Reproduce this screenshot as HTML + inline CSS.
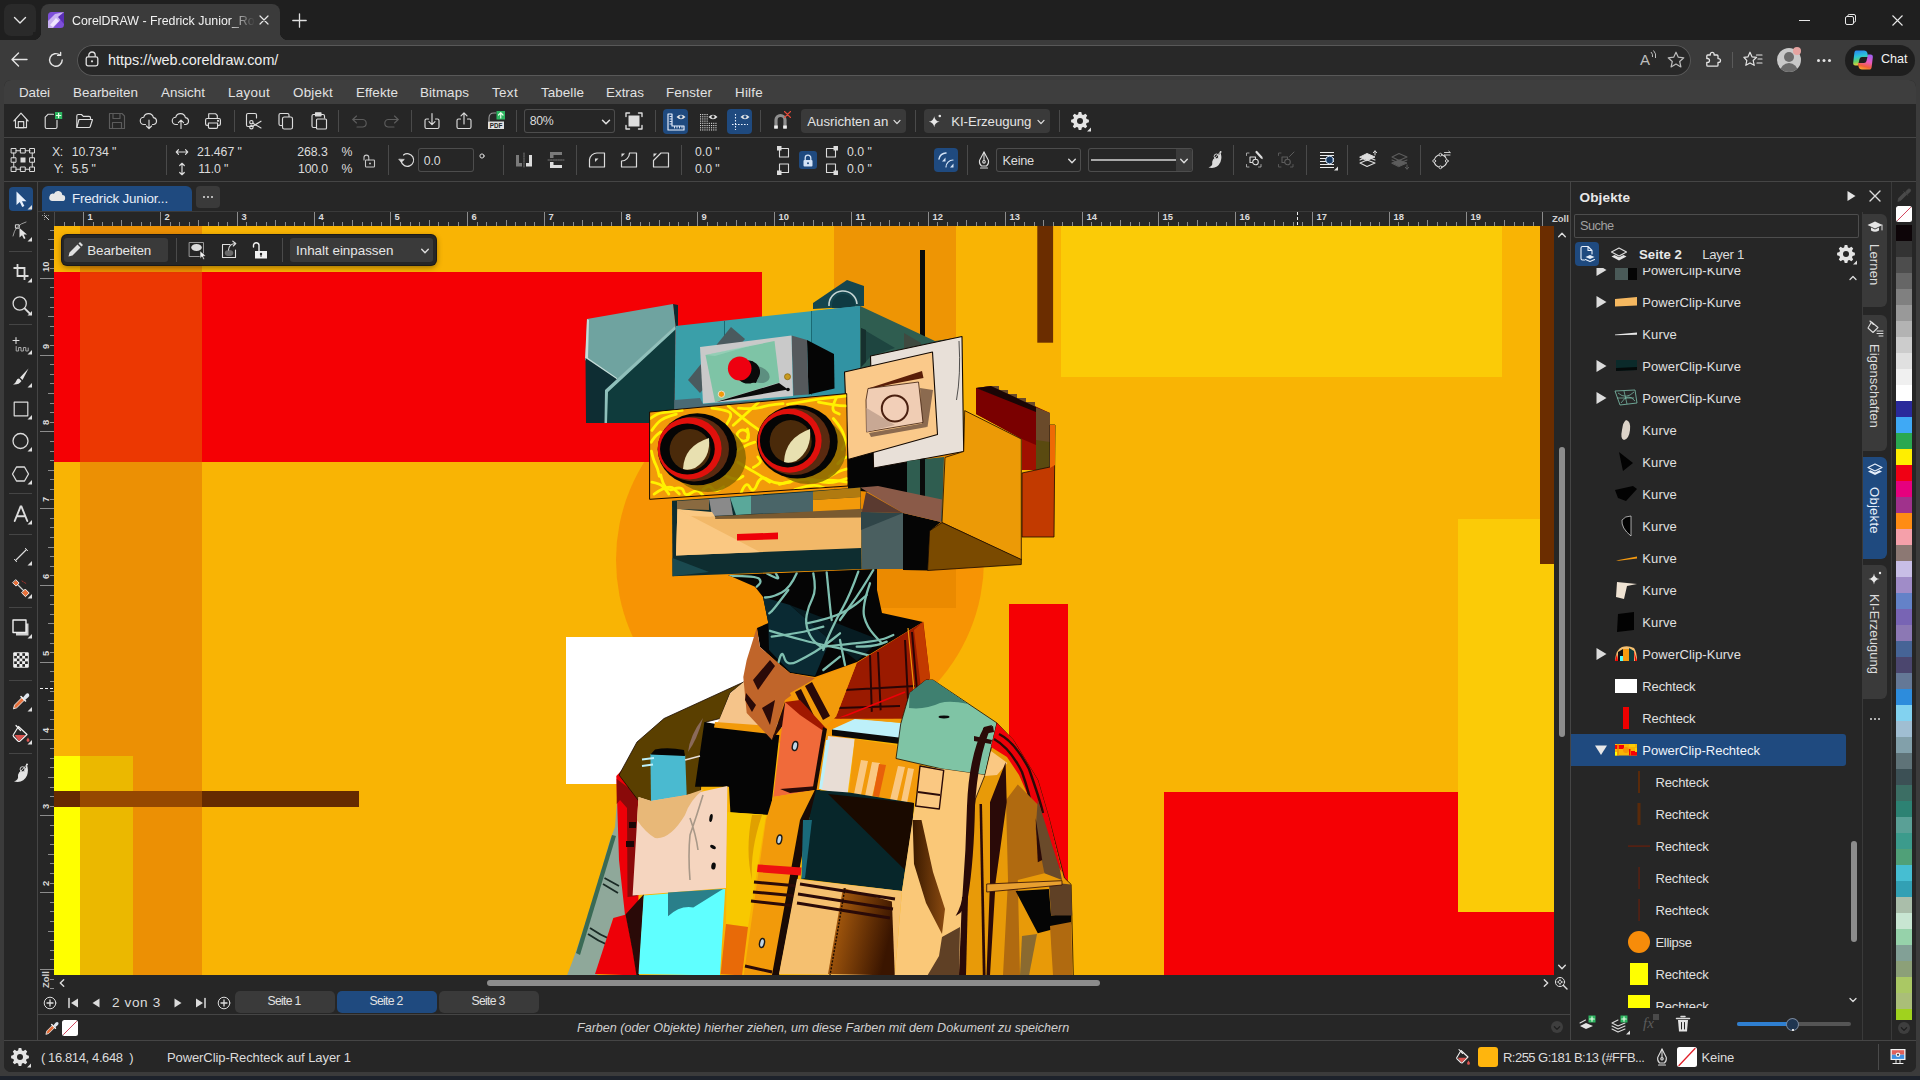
<!DOCTYPE html>
<html><head><meta charset="utf-8"><title>CorelDRAW</title>
<style>
html,body{margin:0;padding:0}
body{width:1920px;height:1080px;background:#3b3b3b;position:relative;overflow:hidden;font-family:"Liberation Sans",sans-serif;color:#d8d8d8;font-size:14px}
.a{position:absolute}
.t{position:absolute;white-space:nowrap;line-height:1}
#app{position:absolute;left:4px;top:80px;width:1912px;height:992px;background:#262626;border-radius:7px;overflow:hidden}
#app .a, #app .t, #app svg.i{ }
.sep{position:absolute;width:1px;background:#4a4a4a}
.hl{position:absolute;height:1px;background:#454545}
svg.i{position:absolute;overflow:visible}

</style></head>
<body>
<!-- browser chrome -->
<div class="a" style="left:0;top:0;width:1920px;height:40px;background:#1f1f1f"></div>
<div class="a" style="left:4px;top:4px;width:32px;height:32px;border-radius:7px;background:#2a2a2a"></div>
<svg class="i" style="left:12px;top:14px" width="16" height="12" viewBox="0 0 16 12"><path d="M2.5 3.5 L8 9 L13.5 3.5" fill="none" stroke="#e6e6e6" stroke-width="1.4" stroke-linecap="round" stroke-linejoin="round"/></svg>
<!-- active tab -->
<div class="a" style="left:41px;top:4px;width:239px;height:36px;border-radius:8px 8px 0 0;background:#3b3b3b"></div>
<div class="a" style="left:33px;top:32px;width:8px;height:8px;background:radial-gradient(circle at 0 0,#1f1f1f 8px,#3b3b3b 8.5px)"></div>
<div class="a" style="left:280px;top:32px;width:8px;height:8px;background:radial-gradient(circle at 100% 0,#1f1f1f 8px,#3b3b3b 8.5px)"></div>
<svg class="i" style="left:48px;top:12px" width="16" height="16" viewBox="0 0 16 16"><rect x="0" y="0" width="16" height="16" rx="3.5" fill="#7d4fd8"/><path d="M0 9 L7 2 L16 0 L16 4 L5 16 L0 16Z" fill="#c9b2f2"/><path d="M2 13 L8 6 L11 9 L5 15Z" fill="#efe6ff"/><path d="M16 0 L16 12 L10 5Z" fill="#5a2fb5"/></svg>
<div class="t" style="left:72px;top:15px;font-size:12.4px;color:#f2f2f2;width:183px;height:18px;overflow:hidden;-webkit-mask-image:linear-gradient(90deg,#000 158px,transparent 183px)">CorelDRAW - Fredrick Junior_Robot</div>
<svg class="i" style="left:259px;top:15px" width="10" height="10" viewBox="0 0 10 10"><path d="M1 1 L9 9 M9 1 L1 9" stroke="#e8e8e8" stroke-width="1.2" stroke-linecap="round"/></svg>
<svg class="i" style="left:292px;top:13px" width="15" height="15" viewBox="0 0 15 15"><path d="M7.5 0.8 V14.2 M0.8 7.5 H14.2" stroke="#e0e0e0" stroke-width="1.3" stroke-linecap="round"/></svg>
<!-- window controls -->
<svg class="i" style="left:1799px;top:20px" width="11" height="2" viewBox="0 0 11 2"><path d="M0 0.5 H11" stroke="#e8e8e8" stroke-width="1"/></svg>
<svg class="i" style="left:1845px;top:14px" width="11" height="11" viewBox="0 0 11 11"><rect x="0.5" y="2.5" width="8" height="8" rx="1.5" fill="none" stroke="#e8e8e8"/><path d="M2.8 2.3 V1.9 Q2.8 0.5 4.2 0.5 H9 Q10.5 0.5 10.5 2 V6.8 Q10.5 8.2 9.1 8.2 H8.7" fill="none" stroke="#e8e8e8"/></svg>
<svg class="i" style="left:1892px;top:15px" width="11" height="11" viewBox="0 0 11 11"><path d="M0.5 0.5 L10.5 10.5 M10.5 0.5 L0.5 10.5" stroke="#e8e8e8" stroke-width="1.1"/></svg>
<!-- address row -->
<div class="a" style="left:0;top:40px;width:1920px;height:40px;background:#3b3b3b"></div>
<svg class="i" style="left:11px;top:52px" width="17" height="15" viewBox="0 0 17 15"><path d="M16 7.5 H1.5 M7.5 1 L1 7.5 L7.5 14" fill="none" stroke="#e4e4e4" stroke-width="1.4" stroke-linecap="round" stroke-linejoin="round"/></svg>
<svg class="i" style="left:48px;top:52px" width="16" height="16" viewBox="0 0 16 16"><path d="M14.2 8 A6.3 6.3 0 1 1 11.9 3.1" fill="none" stroke="#e4e4e4" stroke-width="1.4" stroke-linecap="round"/><path d="M9.6 3.4 H12.6 V0.5" fill="none" stroke="#e4e4e4" stroke-width="1.4" stroke-linecap="round" stroke-linejoin="round"/></svg>
<div class="a" style="left:77px;top:45px;width:1614px;height:31px;border-radius:16px;background:#282828;box-shadow:inset 0 0 0 1px #585858"></div>
<svg class="i" style="left:85px;top:51px" width="14" height="16" viewBox="0 0 14 16"><rect x="1.2" y="5.8" width="11.6" height="9" rx="1.8" fill="none" stroke="#e0e0e0" stroke-width="1.3"/><path d="M3.8 5.8 V4.2 A3.2 3.2 0 0 1 10.2 4.2 V5.8" fill="none" stroke="#e0e0e0" stroke-width="1.3"/><circle cx="7" cy="10.3" r="1.1" fill="#e0e0e0"/></svg>
<div class="t" style="left:108px;top:53px;font-size:14.4px;color:#f0f0f0">https://web.coreldraw.com/</div>
<!-- right addr icons -->
<div class="t" style="left:1640px;top:52px;font-size:15px;color:#bdbdbd">A</div>
<svg class="i" style="left:1650px;top:50px" width="8" height="10" viewBox="0 0 8 10"><path d="M1 2 Q3 4 2.5 7 M3.5 0.5 Q6.5 3.5 5.5 8" fill="none" stroke="#bdbdbd" stroke-width="1"/></svg>
<svg class="i" style="left:1667px;top:51px" width="18" height="17" viewBox="0 0 18 17"><path d="M9 1.2 L11.3 6.2 L16.8 6.8 L12.7 10.5 L13.9 15.9 L9 13.1 L4.1 15.9 L5.3 10.5 L1.2 6.8 L6.7 6.2Z" fill="none" stroke="#bdbdbd" stroke-width="1.2" stroke-linejoin="round"/></svg>
<svg class="i" style="left:1704px;top:51px" width="17" height="17" viewBox="0 0 17 17"><path d="M6.3 3.2 A1.9 1.9 0 0 1 10.1 3.2 V4 H13 Q14 4 14 5 V7.6 H14.6 A1.9 1.9 0 0 1 14.6 11.4 H14 V14.2 Q14 15.2 13 15.2 H3.8 Q2.8 15.2 2.8 14.2 V11.3 H3.6 A1.9 1.9 0 0 0 3.6 7.5 H2.8 V5 Q2.8 4 3.8 4 H6.3Z" fill="none" stroke="#e4e4e4" stroke-width="1.3" stroke-linejoin="round"/></svg>
<div class="a" style="left:1732px;top:52px;width:1px;height:16px;background:#5a5a5a"></div>
<svg class="i" style="left:1743px;top:51px" width="20" height="17" viewBox="0 0 20 17"><path d="M7 1.2 L9 5.8 L13.6 6.3 L10.2 9.5 L11.2 14.3 L7 11.9 L2.8 14.3 L3.8 9.5 L0.9 6.3 L5 5.8Z" fill="none" stroke="#e4e4e4" stroke-width="1.2" stroke-linejoin="round"/><path d="M13.5 4 H19 M15 8 H19 M14 12 H19" stroke="#e4e4e4" stroke-width="1.2" stroke-linecap="round"/></svg>
<div class="a" style="left:1777px;top:48px;width:24px;height:24px;border-radius:12px;background:#c9c9c9;overflow:hidden"><div class="a" style="left:7px;top:4px;width:10px;height:10px;border-radius:5px;background:#6b6b6b"></div><div class="a" style="left:3px;top:15px;width:18px;height:14px;border-radius:9px 9px 0 0;background:#6b6b6b"></div></div>
<div class="a" style="left:1793px;top:47px;width:8px;height:8px;border-radius:4px;background:#e5a3a0"></div>
<div class="a" style="left:1817px;top:59px;width:3px;height:3px;border-radius:2px;background:#e4e4e4;box-shadow:5.5px 0 0 #e4e4e4,11px 0 0 #e4e4e4"></div>
<div class="a" style="left:1845px;top:45px;width:70px;height:31px;border-radius:16px;background:#1e1e1e"></div>
<svg class="i" style="left:1851px;top:49px" width="24" height="22" viewBox="0 0 24 22"><defs><linearGradient id="cp1" x1="0.2" y1="0" x2="0.4" y2="1"><stop offset="0" stop-color="#2a86f0"/><stop offset=".4" stop-color="#2ac4d8"/><stop offset=".7" stop-color="#62d068"/><stop offset="1" stop-color="#f8d030"/></linearGradient><linearGradient id="cp2" x1="0.7" y1="0" x2="0.4" y2="1"><stop offset="0" stop-color="#a060f0"/><stop offset=".45" stop-color="#e85ac0"/><stop offset=".8" stop-color="#f0603a"/><stop offset="1" stop-color="#f8a030"/></linearGradient></defs><path d="M5 1.5 H13 Q15.8 1.5 16.4 4.2 L17.3 8 H11 Q9 8 8.5 10 L7 16.5 H4.5 Q1.8 16.5 2.2 13.5 L3.4 3.5 Q3.8 1.5 5 1.5Z" fill="url(#cp1)"/><path d="M19 20.5 H11 Q8.2 20.5 7.6 17.8 L6.7 14 H13 Q15 14 15.5 12 L17 5.5 H19.5 Q22.2 5.5 21.8 8.5 L20.6 18.5 Q20.2 20.5 19 20.5Z" fill="url(#cp2)"/></svg>
<div class="t" style="left:1881px;top:53px;font-size:12.6px;color:#f2f2f2">Chat</div>
<!-- bottom strip -->
<div class="a" style="left:0;top:1076px;width:1920px;height:4px;background:#1d222b"></div>

<div id="app"><div id="pg" style="position:absolute;left:-4px;top:-80px;width:1920px;height:1080px">
<div class="a" style="left:4px;top:80px;width:1912px;height:24px;background:#3e3e3e;"></div><div class="t" style="left:19px;top:85.53px;font-size:13.4px;color:#e2e2e2;letter-spacing:-0.057px;">Datei</div><div class="t" style="left:73px;top:85.53px;font-size:13.4px;color:#e2e2e2;letter-spacing:0.018px;">Bearbeiten</div><div class="t" style="left:161px;top:85.53px;font-size:13.4px;color:#e2e2e2;letter-spacing:0.008px;">Ansicht</div><div class="t" style="left:228px;top:85.53px;font-size:13.4px;color:#e2e2e2;letter-spacing:0.294px;">Layout</div><div class="t" style="left:293px;top:85.53px;font-size:13.4px;color:#e2e2e2;letter-spacing:0.212px;">Objekt</div><div class="t" style="left:356px;top:85.53px;font-size:13.4px;color:#e2e2e2;letter-spacing:0.076px;">Effekte</div><div class="t" style="left:420px;top:85.53px;font-size:13.4px;color:#e2e2e2;letter-spacing:0.085px;">Bitmaps</div><div class="t" style="left:492px;top:85.53px;font-size:13.4px;color:#e2e2e2;letter-spacing:0.356px;">Text</div><div class="t" style="left:541px;top:85.53px;font-size:13.4px;color:#e2e2e2;letter-spacing:0.076px;">Tabelle</div><div class="t" style="left:606px;top:85.53px;font-size:13.4px;color:#e2e2e2;letter-spacing:0.004px;">Extras</div><div class="t" style="left:666px;top:85.53px;font-size:13.4px;color:#e2e2e2;letter-spacing:0.082px;">Fenster</div><div class="t" style="left:735px;top:85.53px;font-size:13.4px;color:#e2e2e2;letter-spacing:0.239px;">Hilfe</div>
<div class="a" style="left:4px;top:104px;width:1912px;height:34px;background:#262626;"></div><div class="a" style="left:4px;top:137px;width:1912px;height:1px;background:#454545;"></div><svg class="i" style="left:8.899999999999999px;top:109.0px" width="24" height="24" viewBox="-12.0 -12.0 24 24" fill="none" stroke="#dcdcdc" stroke-width="1.15" stroke-linecap="round" stroke-linejoin="round"><path d="M-7.1 0 L0 -7.9 L7.1 0 M-5.5 -1.5 V6.6 H5.5 V-1.5"/><rect x="-2.7" y="0.6" width="5.4" height="6"/></svg><svg class="i" style="left:40.0px;top:109.0px" width="24" height="24" viewBox="-12.0 -12.0 24 24" fill="none" stroke="#dcdcdc" stroke-width="1.15" stroke-linecap="round" stroke-linejoin="round"><path d="M1.5 -6.8 H-3.8 L-6.8 -3.8 V6 Q-6.8 7.5 -5.3 7.5 H3.5 Q5 7.5 5 6 V-0.8"/><rect x="3" y="-9" width="7.2" height="7" fill="#2db560" stroke="none"/><path d="M6.6 -7.7 V-3.3 M4.4 -5.5 H8.8" stroke="#e9ffe9" stroke-width="1.2"/></svg><svg class="i" style="left:72.3px;top:109.0px" width="24" height="24" viewBox="-12.0 -12.0 24 24" fill="none" stroke="#dcdcdc" stroke-width="1.15" stroke-linecap="round" stroke-linejoin="round"><path d="M-7.2 6 V-5 Q-7.2 -6.5 -5.7 -6.5 H-2.5 L-0.7 -4.7 H5 Q6.5 -4.7 6.5 -3.2 V-1.5"/><path d="M-7.2 6.5 L-5 -1.5 H8.5 L6.3 5.5 Q6 6.5 5 6.5 Z"/></svg><svg class="i" style="left:105.0px;top:109.0px" width="24" height="24" viewBox="-12.0 -12.0 24 24" fill="none" stroke="#5c5c5c" stroke-width="1.15" stroke-linecap="round" stroke-linejoin="round"><path d="M-7.5 -7.5 H5 L7.5 -5 V7.5 H-7.5Z"/><rect x="-4" y="-7.5" width="7" height="5"/><rect x="-4.5" y="1.5" width="9" height="6"/></svg><svg class="i" style="left:136.5px;top:109.0px" width="24" height="24" viewBox="-12.0 -12.0 24 24" fill="none" stroke="#dcdcdc" stroke-width="1.15" stroke-linecap="round" stroke-linejoin="round"><path d="M-3.5 3.5 H-5 A3.6 3.6 0 0 1 -5.3 -3.7 A5 5 0 0 1 4.4 -3.4 A3.5 3.5 0 0 1 4.8 3.5 H3.5"/><path d="M0 -1 V7.5 M-2.6 5 L0 7.6 L2.6 5"/></svg><svg class="i" style="left:168.5px;top:109.0px" width="24" height="24" viewBox="-12.0 -12.0 24 24" fill="none" stroke="#dcdcdc" stroke-width="1.15" stroke-linecap="round" stroke-linejoin="round"><path d="M-3.5 3.5 H-5 A3.6 3.6 0 0 1 -5.3 -3.7 A5 5 0 0 1 4.4 -3.4 A3.5 3.5 0 0 1 4.8 3.5 H3.5"/><path d="M0 7.5 V-0.8 M-2.6 1.7 L0 -0.9 L2.6 1.7"/></svg><svg class="i" style="left:201.0px;top:109.0px" width="24" height="24" viewBox="-12.0 -12.0 24 24" fill="none" stroke="#dcdcdc" stroke-width="1.15" stroke-linecap="round" stroke-linejoin="round"><path d="M-4.3 -2.5 V-7.3 H2.5 L4.3 -5.5 V-2.5"/><path d="M-4.6 4.3 H-6 Q-7.4 4.3 -7.4 2.9 V-1.1 Q-7.4 -2.5 -6 -2.5 H6 Q7.4 -2.5 7.4 -1.1 V2.9 Q7.4 4.3 6 4.3 H4.6"/><path d="M-4.6 2 H4.6 V6 Q4.6 7.4 3.2 7.4 H-3.2 Q-4.6 7.4 -4.6 6Z"/><circle cx="5" cy="-0.3" r="0.5" fill="#dcdcdc"/></svg><div class="sep" style="left:234px;top:110px;height:22px"></div><svg class="i" style="left:241.0px;top:109.0px" width="24" height="24" viewBox="-12.0 -12.0 24 24" fill="none" stroke="#dcdcdc" stroke-width="1.15" stroke-linecap="round" stroke-linejoin="round"><path d="M0 5.5 H-5 Q-6.5 5.5 -6.5 4 V-6 Q-6.5 -7.5 -5 -7.5 H2 Q3.5 -7.5 3.5 -6 V-3"/><circle cx="-1.6" cy="6.2" r="1.7"/><circle cx="-1.6" cy="1.2" r="1.7"/><path d="M-0.2 2.2 L8 7 M-0.2 5.2 L8 0.2"/></svg><svg class="i" style="left:274.2px;top:109.0px" width="24" height="24" viewBox="-12.0 -12.0 24 24" fill="none" stroke="#dcdcdc" stroke-width="1.15" stroke-linecap="round" stroke-linejoin="round"><rect x="-3.5" y="-4" width="10" height="12" rx="1.8"/><path d="M-4 4.5 H-5.5 Q-7 4.5 -7 3 V-6 Q-7 -7.5 -5.5 -7.5 H1.5 Q3 -7.5 3 -6 V-4.5"/></svg><svg class="i" style="left:307.0px;top:109.0px" width="24" height="24" viewBox="-12.0 -12.0 24 24" fill="none" stroke="#dcdcdc" stroke-width="1.15" stroke-linecap="round" stroke-linejoin="round"><path d="M-3 6.5 H-5.5 Q-7 6.5 -7 5 V-5 Q-7 -6.5 -5.5 -6.5 H4 Q5.5 -6.5 5.5 -5 V-3"/><rect x="-3.5" y="-8.2" width="5.5" height="3" fill="#dcdcdc"/><rect x="-2.5" y="-2" width="10" height="10" rx="1"/></svg><div class="sep" style="left:338px;top:110px;height:22px"></div><svg class="i" style="left:347.7px;top:109.0px" width="24" height="24" viewBox="-12.0 -12.0 24 24" fill="none" stroke="#5c5c5c" stroke-width="1.15" stroke-linecap="round" stroke-linejoin="round"><path d="M-7 -1.5 H3 A3.8 3.8 0 0 1 3 6 H-3"/><path d="M-3.5 -5 L-7.2 -1.5 L-3.5 2"/></svg><svg class="i" style="left:379.0px;top:109.0px" width="24" height="24" viewBox="-12.0 -12.0 24 24" fill="none" stroke="#5c5c5c" stroke-width="1.15" stroke-linecap="round" stroke-linejoin="round"><path d="M7 -1.5 H-3 A3.8 3.8 0 0 0 -3 6 H3"/><path d="M3.5 -5 L7.2 -1.5 L3.5 2"/></svg><div class="sep" style="left:411px;top:110px;height:22px"></div><svg class="i" style="left:419.5px;top:109.0px" width="24" height="24" viewBox="-12.0 -12.0 24 24" fill="none" stroke="#dcdcdc" stroke-width="1.15" stroke-linecap="round" stroke-linejoin="round"><path d="M-3.5 -2 H-5.5 Q-7 -2 -7 -0.5 V6 Q-7 7.5 -5.5 7.5 H5.5 Q7 7.5 7 6 V-0.5 Q7 -2 5.5 -2 H3.5"/><path d="M0 -7.5 V3.5 M-3 0.7 L0 3.7 L3 0.7"/></svg><svg class="i" style="left:451.5px;top:109.0px" width="24" height="24" viewBox="-12.0 -12.0 24 24" fill="none" stroke="#dcdcdc" stroke-width="1.15" stroke-linecap="round" stroke-linejoin="round"><path d="M-3.5 -2 H-5.5 Q-7 -2 -7 -0.5 V6 Q-7 7.5 -5.5 7.5 H5.5 Q7 7.5 7 6 V-0.5 Q7 -2 5.5 -2 H3.5"/><path d="M0 3 V-8 M-3 -5.2 L0 -8.2 L3 -5.2"/></svg><svg class="i" style="left:484.0px;top:109.0px" width="24" height="24" viewBox="-12.0 -12.0 24 24" fill="none" stroke="#dcdcdc" stroke-width="1.15" stroke-linecap="round" stroke-linejoin="round"><path d="M-7 0 V-3 Q-7 -8 -2 -8 H0" stroke="#9a9a9a"/><rect x="0.5" y="-10" width="8.5" height="8.5" fill="#2db560" stroke="none"/><path d="M4.75 -3 V-8 M2.5 -6 L4.75 -8.3 L7 -6" stroke="#e9ffe9" stroke-width="1.2"/><rect x="-8" y="0.5" width="16" height="7.5" fill="#e0e0e0" stroke="none"/><text x="0" y="6.6" font-family="Liberation Sans" font-weight="bold" font-size="6.3" text-anchor="middle" fill="#222" stroke="none">PDF</text></svg><div class="sep" style="left:516px;top:110px;height:22px"></div><div class="a" style="left:524px;top:109px;width:91px;height:24px;background:#262626;border-radius:3px;box-shadow:inset 0 0 0 1px #4d4d4d"></div><div class="t" style="left:529.7px;top:115.27px;font-size:12.3px;color:#dcdcdc;letter-spacing:-0.273px;">80%</div><svg class="i" style="left:594.0px;top:110.0px" width="24" height="24" viewBox="-12.0 -12.0 24 24" fill="none" stroke="#dcdcdc" stroke-width="1.5" stroke-linecap="round" stroke-linejoin="round"><path d="M-3.5 -1.8 L0 1.8 L3.5 -1.8"/></svg><svg class="i" style="left:622.0px;top:109.0px" width="24" height="24" viewBox="-12.0 -12.0 24 24" fill="none" stroke="#dcdcdc" stroke-width="1.15" stroke-linecap="round" stroke-linejoin="round"><rect x="-5.5" y="-5.5" width="11" height="11" fill="#dcdcdc" stroke="none"/><path d="M-8 -4.5 V-8 H-4.5 M4.5 -8 H8 V-4.5 M8 4.5 V8 H4.5 M-4.5 8 H-8 V4.5" stroke-width="1.4"/></svg><div class="sep" style="left:655px;top:110px;height:22px"></div><div class="a" style="left:663px;top:109px;width:25px;height:25px;background:#1f4a7f;border-radius:4px"></div><svg class="i" style="left:663.5px;top:109.5px" width="24" height="24" viewBox="-12.0 -12.0 24 24" fill="none" stroke="#dcdcdc" stroke-width="1.15" stroke-linecap="round" stroke-linejoin="round"><path d="M-8 -8 H-4 V4 H8 V8 H-8Z" stroke="#eaf2ff"/><path d="M-6 -5.5 H-4.5 M-6 -3 H-4.5 M-6 -0.5 H-4.5 M-6 2 H-4.5 M-1.5 6 V4.5 M1 6 V4.5 M3.5 6 V4.5 M6 6 V4.5" stroke-width="0.9" stroke="#eaf2ff"/><path d="M0.5 -5 Q5 -9.5 9.5 -5 Q5 -0.5 0.5 -5Z" fill="#e8e8e8" stroke="none"/><circle cx="5" cy="-5.2" r="1.6" fill="#1f4a7f" stroke="none"/></svg><svg class="i" style="left:696.0px;top:109.5px" width="24" height="24" viewBox="-12.0 -12.0 24 24" fill="none" stroke="#dcdcdc" stroke-width="1.15" stroke-linecap="round" stroke-linejoin="round"><rect x="-8.0" y="-8.0" width="1.1" height="1.1" fill="#dcdcdc" stroke="none"/><rect x="-8.0" y="-5.8" width="1.1" height="1.1" fill="#dcdcdc" stroke="none"/><rect x="-8.0" y="-3.5999999999999996" width="1.1" height="1.1" fill="#dcdcdc" stroke="none"/><rect x="-8.0" y="-1.3999999999999995" width="1.1" height="1.1" fill="#dcdcdc" stroke="none"/><rect x="-8.0" y="0.8000000000000007" width="1.1" height="1.1" fill="#dcdcdc" stroke="none"/><rect x="-8.0" y="3.0" width="1.1" height="1.1" fill="#dcdcdc" stroke="none"/><rect x="-8.0" y="5.200000000000001" width="1.1" height="1.1" fill="#dcdcdc" stroke="none"/><rect x="-8.0" y="7.400000000000002" width="1.1" height="1.1" fill="#dcdcdc" stroke="none"/><rect x="-5.8" y="-8.0" width="1.1" height="1.1" fill="#dcdcdc" stroke="none"/><rect x="-5.8" y="-5.8" width="1.1" height="1.1" fill="#dcdcdc" stroke="none"/><rect x="-5.8" y="-3.5999999999999996" width="1.1" height="1.1" fill="#dcdcdc" stroke="none"/><rect x="-5.8" y="-1.3999999999999995" width="1.1" height="1.1" fill="#dcdcdc" stroke="none"/><rect x="-5.8" y="0.8000000000000007" width="1.1" height="1.1" fill="#dcdcdc" stroke="none"/><rect x="-5.8" y="3.0" width="1.1" height="1.1" fill="#dcdcdc" stroke="none"/><rect x="-5.8" y="5.200000000000001" width="1.1" height="1.1" fill="#dcdcdc" stroke="none"/><rect x="-5.8" y="7.400000000000002" width="1.1" height="1.1" fill="#dcdcdc" stroke="none"/><rect x="-3.5999999999999996" y="-8.0" width="1.1" height="1.1" fill="#dcdcdc" stroke="none"/><rect x="-3.5999999999999996" y="-5.8" width="1.1" height="1.1" fill="#dcdcdc" stroke="none"/><rect x="-3.5999999999999996" y="-3.5999999999999996" width="1.1" height="1.1" fill="#dcdcdc" stroke="none"/><rect x="-3.5999999999999996" y="-1.3999999999999995" width="1.1" height="1.1" fill="#dcdcdc" stroke="none"/><rect x="-3.5999999999999996" y="0.8000000000000007" width="1.1" height="1.1" fill="#dcdcdc" stroke="none"/><rect x="-3.5999999999999996" y="3.0" width="1.1" height="1.1" fill="#dcdcdc" stroke="none"/><rect x="-3.5999999999999996" y="5.200000000000001" width="1.1" height="1.1" fill="#dcdcdc" stroke="none"/><rect x="-3.5999999999999996" y="7.400000000000002" width="1.1" height="1.1" fill="#dcdcdc" stroke="none"/><rect x="-1.3999999999999995" y="-8.0" width="1.1" height="1.1" fill="#dcdcdc" stroke="none"/><rect x="-1.3999999999999995" y="-5.8" width="1.1" height="1.1" fill="#dcdcdc" stroke="none"/><rect x="-1.3999999999999995" y="-3.5999999999999996" width="1.1" height="1.1" fill="#dcdcdc" stroke="none"/><rect x="-1.3999999999999995" y="-1.3999999999999995" width="1.1" height="1.1" fill="#dcdcdc" stroke="none"/><rect x="-1.3999999999999995" y="0.8000000000000007" width="1.1" height="1.1" fill="#dcdcdc" stroke="none"/><rect x="-1.3999999999999995" y="3.0" width="1.1" height="1.1" fill="#dcdcdc" stroke="none"/><rect x="-1.3999999999999995" y="5.200000000000001" width="1.1" height="1.1" fill="#dcdcdc" stroke="none"/><rect x="-1.3999999999999995" y="7.400000000000002" width="1.1" height="1.1" fill="#dcdcdc" stroke="none"/><rect x="0.8000000000000007" y="0.8000000000000007" width="1.1" height="1.1" fill="#dcdcdc" stroke="none"/><rect x="0.8000000000000007" y="3.0" width="1.1" height="1.1" fill="#dcdcdc" stroke="none"/><rect x="0.8000000000000007" y="5.200000000000001" width="1.1" height="1.1" fill="#dcdcdc" stroke="none"/><rect x="0.8000000000000007" y="7.400000000000002" width="1.1" height="1.1" fill="#dcdcdc" stroke="none"/><rect x="3.0" y="0.8000000000000007" width="1.1" height="1.1" fill="#dcdcdc" stroke="none"/><rect x="3.0" y="3.0" width="1.1" height="1.1" fill="#dcdcdc" stroke="none"/><rect x="3.0" y="5.200000000000001" width="1.1" height="1.1" fill="#dcdcdc" stroke="none"/><rect x="3.0" y="7.400000000000002" width="1.1" height="1.1" fill="#dcdcdc" stroke="none"/><rect x="5.200000000000001" y="0.8000000000000007" width="1.1" height="1.1" fill="#dcdcdc" stroke="none"/><rect x="5.200000000000001" y="3.0" width="1.1" height="1.1" fill="#dcdcdc" stroke="none"/><rect x="5.200000000000001" y="5.200000000000001" width="1.1" height="1.1" fill="#dcdcdc" stroke="none"/><rect x="5.200000000000001" y="7.400000000000002" width="1.1" height="1.1" fill="#dcdcdc" stroke="none"/><rect x="7.400000000000002" y="0.8000000000000007" width="1.1" height="1.1" fill="#dcdcdc" stroke="none"/><rect x="7.400000000000002" y="3.0" width="1.1" height="1.1" fill="#dcdcdc" stroke="none"/><rect x="7.400000000000002" y="5.200000000000001" width="1.1" height="1.1" fill="#dcdcdc" stroke="none"/><rect x="7.400000000000002" y="7.400000000000002" width="1.1" height="1.1" fill="#dcdcdc" stroke="none"/><path d="M0.5 -5 Q5 -9.5 9.5 -5 Q5 -0.5 0.5 -5Z" fill="#e8e8e8" stroke="none"/><circle cx="5" cy="-5.2" r="1.6" fill="#262626" stroke="none"/></svg><div class="a" style="left:727px;top:109px;width:25px;height:25px;background:#1f4a7f;border-radius:4px"></div><svg class="i" style="left:727.5px;top:109.5px" width="24" height="24" viewBox="-12.0 -12.0 24 24" fill="none" stroke="#dcdcdc" stroke-width="1.15" stroke-linecap="round" stroke-linejoin="round"><path d="M-4.5 -8 V8 M-8 2.5 H8" stroke="#eaf2ff" stroke-dasharray="1.6 1.4" stroke-width="1.1" stroke-linecap="butt"/><path d="M0.5 -5 Q5 -9.5 9.5 -5 Q5 -0.5 0.5 -5Z" fill="#e8e8e8" stroke="none"/><circle cx="5" cy="-5.2" r="1.6" fill="#1f4a7f" stroke="none"/></svg><div class="sep" style="left:760px;top:110px;height:22px"></div><svg class="i" style="left:769.0px;top:109.0px" width="24" height="24" viewBox="-12.0 -12.0 24 24" fill="none" stroke="#dcdcdc" stroke-width="1.15" stroke-linecap="round" stroke-linejoin="round"><path d="M-5 7 V-1 A4.5 4.5 0 0 1 4 -1 V7" stroke="#8f8f8f" stroke-width="3.2" stroke-linecap="butt"/><rect x="-6.8" y="4.5" width="3.6" height="3.2" fill="#f0f0f0" stroke="none"/><rect x="2.2" y="4.5" width="3.6" height="3.2" fill="#f0f0f0" stroke="none"/><path d="M3.5 -9.5 L9.5 -3.5 M9.5 -9.5 L3.5 -3.5" stroke="#e24a3a" stroke-width="1.1"/></svg><div class="a" style="left:801px;top:109px;width:105px;height:24px;background:#3a3a3a;border-radius:4px"></div><div class="t" style="left:807.2px;top:114.83px;font-size:13.2px;color:#e4e4e4;letter-spacing:0.037px;">Ausrichten an</div><svg class="i" style="left:885.0px;top:109.5px" width="24" height="24" viewBox="-12.0 -12.0 24 24" fill="none" stroke="#dcdcdc" stroke-width="1.3" stroke-linecap="round" stroke-linejoin="round"><path d="M-3 -1.6 L0 1.6 L3 -1.6"/></svg><div class="sep" style="left:915px;top:110px;height:22px"></div><div class="a" style="left:924px;top:109px;width:126px;height:24px;background:#3a3a3a;border-radius:4px"></div><svg class="i" style="left:923.0px;top:109.0px" width="24" height="24" viewBox="-12.0 -12.0 24 24" fill="none" stroke="#dcdcdc" stroke-width="1.15" stroke-linecap="round" stroke-linejoin="round"><path d="M0 -5.5 Q0.6 -0.6 5.5 0 Q0.6 0.6 0 5.5 Q-0.6 0.6 -5.5 0 Q-0.6 -0.6 0 -5.5Z" fill="#e8e8e8" stroke="none" transform="translate(-0.8 0.8)"/><circle cx="4.8" cy="-5" r="1.3" fill="#e8e8e8" stroke="none"/></svg><div class="t" style="left:951.2px;top:114.83px;font-size:13.2px;color:#e4e4e4;letter-spacing:-0.035px;">KI-Erzeugung</div><svg class="i" style="left:1029.0px;top:109.5px" width="24" height="24" viewBox="-12.0 -12.0 24 24" fill="none" stroke="#dcdcdc" stroke-width="1.3" stroke-linecap="round" stroke-linejoin="round"><path d="M-3 -1.6 L0 1.6 L3 -1.6"/></svg><div class="sep" style="left:1059px;top:110px;height:22px"></div><svg class="i" style="left:1068.0px;top:109.0px" width="24" height="24" viewBox="-12.0 -12.0 24 24" fill="none" stroke="#dcdcdc" stroke-width="1.15" stroke-linecap="round" stroke-linejoin="round"><path d="M-1.3 -8.2 H1.3 L1.9 -5.9 L3.3 -5.3 L5.4 -6.5 L7.2 -4.7 L6 -2.6 L6.6 -1.2 L8.9 -0.6 V2 L6.6 2.6 L6 4 L7.2 6.1 L5.4 7.9 L3.3 6.7 L1.9 7.3 L1.3 9.6 H-1.3 L-1.9 7.3 L-3.3 6.7 L-5.4 7.9 L-7.2 6.1 L-6 4 L-6.6 2.6 L-8.9 2 V-0.6 L-6.6 -1.2 L-6 -2.6 L-7.2 -4.7 L-5.4 -6.5 L-3.3 -5.3 L-1.9 -5.9Z" fill="#e4e4e4" stroke="none" transform="translate(0 -0.7)"/><circle cx="0" cy="0" r="3" fill="#262626" stroke="none"/><path d="M4 0 H0 L4 -4Z" fill="#e0e0e0" stroke="none" transform="translate(7 10.5)"/></svg>
<div class="a" style="left:4px;top:138px;width:1912px;height:43px;background:#262626;"></div><div class="a" style="left:4px;top:181px;width:1912px;height:1px;background:#454545;"></div><svg class="i" style="left:11.0px;top:148.0px" width="24" height="24" viewBox="-12.0 -12.0 24 24" fill="none" stroke="#dcdcdc" stroke-width="1.15" stroke-linecap="round" stroke-linejoin="round"><rect x="-11.5" y="-11.5" width="4.5" height="4.5" stroke-width="1"/><rect x="-2.25" y="-11.5" width="4.5" height="4.5" stroke-width="1"/><rect x="7" y="-11.5" width="4.5" height="4.5" stroke-width="1"/><rect x="-11.5" y="-2.25" width="4.5" height="4.5" stroke-width="1"/><rect x="7" y="-2.25" width="4.5" height="4.5" stroke-width="1"/><rect x="-11.5" y="7" width="4.5" height="4.5" stroke-width="1"/><rect x="-2.25" y="7" width="4.5" height="4.5" stroke-width="1"/><rect x="7" y="7" width="4.5" height="4.5" stroke-width="1"/><rect x="-2.5" y="-2.5" width="5" height="5" fill="#dcdcdc" stroke="none"/><path d="M-7 -9.25 H-2.25 M2.25 -9.25 H7 M-7 9.25 H-2.25 M2.25 9.25 H7 M-9.25 -7 V-2.25 M-9.25 2.25 V7 M9.25 -7 V-2.25 M9.25 2.25 V7" stroke-width="1"/></svg><div class="t" style="left:52.1px;top:145.87px;font-size:12.3px;color:#dcdcdc;letter-spacing:-0.461px;">X:</div><div class="t" style="left:71.8px;top:145.87px;font-size:12.3px;color:#dcdcdc;letter-spacing:-0.113px;">10.734 "</div><div class="t" style="left:53.8px;top:162.77px;font-size:12.3px;color:#dcdcdc;letter-spacing:-0.972px;">Y:</div><div class="t" style="left:71.8px;top:162.77px;font-size:12.3px;color:#dcdcdc;letter-spacing:-0.217px;">5.5 "</div><div class="sep" style="left:166px;top:145px;height:30px"></div><svg class="i" style="left:170.0px;top:139.5px" width="24" height="24" viewBox="-12.0 -12.0 24 24" fill="none" stroke="#dcdcdc" stroke-width="1.2" stroke-linecap="round" stroke-linejoin="round"><path d="M-5.5 0 H5.5 M-3.5 -2.3 L-5.7 0 L-3.5 2.3 M3.5 -2.3 L5.7 0 L3.5 2.3"/></svg><svg class="i" style="left:170.0px;top:156.5px" width="24" height="24" viewBox="-12.0 -12.0 24 24" fill="none" stroke="#dcdcdc" stroke-width="1.2" stroke-linecap="round" stroke-linejoin="round"><path d="M0 -5.5 V5.5 M-2.3 -3.5 L0 -5.7 L2.3 -3.5 M-2.3 3.5 L0 5.7 L2.3 3.5"/></svg><div class="t" style="left:196.9px;top:145.87px;font-size:12.3px;color:#dcdcdc;letter-spacing:-0.051px;">21.467 "</div><div class="t" style="left:198.2px;top:162.77px;font-size:12.3px;color:#dcdcdc;letter-spacing:-0.102px;">11.0 "</div><div class="t" style="left:297.2px;top:145.87px;font-size:12.3px;color:#dcdcdc;letter-spacing:-0.036px;">268.3</div><div class="t" style="left:298px;top:162.77px;font-size:12.3px;color:#dcdcdc;letter-spacing:-0.196px;">100.0</div><div class="t" style="left:341.6px;top:146.37px;font-size:12.3px;color:#dcdcdc;letter-spacing:-0.436px;">%</div><div class="t" style="left:341.6px;top:163.27px;font-size:12.3px;color:#dcdcdc;letter-spacing:-0.436px;">%</div><svg class="i" style="left:358.0px;top:149.0px" width="24" height="24" viewBox="-12.0 -12.0 24 24" fill="none" stroke="#c8c8c8" stroke-width="1.1" stroke-linecap="round" stroke-linejoin="round"><rect x="-4.5" y="-1" width="9" height="7" rx="0.8"/><path d="M-6 -1 V-3.5 A2.4 2.4 0 0 1 -1.2 -3.5 V-1"/><rect x="-0.8" y="1.7" width="1.6" height="1.6" fill="#dcdcdc" stroke="none"/></svg><div class="sep" style="left:388px;top:145px;height:30px"></div><svg class="i" style="left:395.0px;top:148.0px" width="24" height="24" viewBox="-12.0 -12.0 24 24" fill="none" stroke="#dcdcdc" stroke-width="1.2" stroke-linecap="round" stroke-linejoin="round"><path d="M-5.8 1.5 A6.3 6.3 0 1 0 -3.5 -5"/><path d="M-8 -0.5 L-5.6 2.2 L-3 -0.3Z" fill="#dcdcdc" stroke-width="0.8"/></svg><div class="a" style="left:418px;top:148px;width:56px;height:24px;background:#262626;border-radius:3px;box-shadow:inset 0 0 0 1px #4d4d4d"></div><div class="t" style="left:423.75px;top:155.07px;font-size:12.3px;color:#dcdcdc;letter-spacing:-0.083px;">0.0</div><svg class="i" style="left:469.5px;top:144.0px" width="24" height="24" viewBox="-12.0 -12.0 24 24" fill="none" stroke="#dcdcdc" stroke-width="1" stroke-linecap="round" stroke-linejoin="round"><circle cx="0" cy="0" r="2.1"/></svg><div class="sep" style="left:503px;top:145px;height:30px"></div><svg class="i" style="left:512.0px;top:148.0px" width="24" height="24" viewBox="-12.0 -12.0 24 24" fill="none" stroke="#dcdcdc" stroke-width="1.15" stroke-linecap="round" stroke-linejoin="round"><path d="M-8 -5 H-5 V3 H-2 V6.5 H-8Z" fill="#7a7a7a" stroke="none"/><path d="M8 -5 H5 V3 H2 V6.5 H8Z" fill="#dcdcdc" stroke="none"/><path d="M0 -7 V8" stroke="#8a8a8a" stroke-width="0.8" stroke-dasharray="1.5 1"/></svg><svg class="i" style="left:544.0px;top:148.0px" width="24" height="24" viewBox="-12.0 -12.0 24 24" fill="none" stroke="#dcdcdc" stroke-width="1.15" stroke-linecap="round" stroke-linejoin="round"><path d="M-6 -8 H6 V-5 H-2.5 V-2 H-6Z" fill="#7a7a7a" stroke="none"/><path d="M-6 8 H6 V5 H-2.5 V2 H-6Z" fill="#dcdcdc" stroke="none"/><path d="M-8 0 H8" stroke="#8a8a8a" stroke-width="0.8" stroke-dasharray="1.5 1"/></svg><div class="sep" style="left:576px;top:145px;height:30px"></div><svg class="i" style="left:585.0px;top:148.0px" width="24" height="24" viewBox="-12.0 -12.0 24 24" fill="none" stroke="#dcdcdc" stroke-width="1.2" stroke-linecap="round" stroke-linejoin="round"><path d="M-7.5 7 V-0.5 A7.5 7.5 0 0 1 0 -7 H7.5 V7Z"/><path d="M-2 -1.5 H1.5 L-2 2Z" fill="#dcdcdc" stroke="none"/></svg><svg class="i" style="left:617.0px;top:148.0px" width="24" height="24" viewBox="-12.0 -12.0 24 24" fill="none" stroke="#dcdcdc" stroke-width="1.2" stroke-linecap="round" stroke-linejoin="round"><path d="M-7.5 7 V1 A8 8 0 0 0 0.5 -7 H7.5 V7Z"/><path d="M-7.5 -3 V-6.5 H-4Z" fill="#dcdcdc" stroke="none"/></svg><svg class="i" style="left:649.0px;top:148.0px" width="24" height="24" viewBox="-12.0 -12.0 24 24" fill="none" stroke="#dcdcdc" stroke-width="1.2" stroke-linecap="round" stroke-linejoin="round"><path d="M-7.5 7 V0.5 L0 -7 H7.5 V7Z"/><path d="M-7.5 -3 V-6.5 H-4Z" fill="#dcdcdc" stroke="none"/></svg><div class="sep" style="left:681px;top:145px;height:30px"></div><div class="t" style="left:695px;top:145.87px;font-size:12.3px;color:#dcdcdc;letter-spacing:-0.057px;">0.0 "</div><div class="t" style="left:695px;top:162.77px;font-size:12.3px;color:#dcdcdc;letter-spacing:-0.057px;">0.0 "</div><svg class="i" style="left:771.0px;top:140.0px" width="24" height="24" viewBox="-12.0 -12.0 24 24" fill="none" stroke="#dcdcdc" stroke-width="1.15" stroke-linecap="round" stroke-linejoin="round"><rect x="-3.5" y="-3.5" width="9" height="8.5" stroke-width="1.1"/><rect x="-6" y="-6" width="4.5" height="4.5" fill="#dcdcdc" stroke="none"/></svg><svg class="i" style="left:771.0px;top:157.0px" width="24" height="24" viewBox="-12.0 -12.0 24 24" fill="none" stroke="#dcdcdc" stroke-width="1.15" stroke-linecap="round" stroke-linejoin="round"><rect x="-3.5" y="-5" width="9" height="8.5" stroke-width="1.1"/><rect x="-6" y="1.5" width="4.5" height="4.5" fill="#dcdcdc" stroke="none"/></svg><div class="a" style="left:799px;top:151px;width:18px;height:18px;background:#1f4a7f;border-radius:3px"></div><svg class="i" style="left:796.0px;top:148.5px" width="24" height="24" viewBox="-12.0 -12.0 24 24" fill="none" stroke="#dcdcdc" stroke-width="1.15" stroke-linecap="round" stroke-linejoin="round"><rect x="-4.5" y="-1" width="9" height="6.5" rx="1" fill="#d5e4f7" stroke="none"/><path d="M-2.8 -1 V-3 A2.8 2.8 0 0 1 2.8 -3 V-1" stroke="#d5e4f7" stroke-width="1.3"/><circle cx="0" cy="2.2" r="1" fill="#1f4a7f" stroke="none"/></svg><svg class="i" style="left:820.0px;top:140.0px" width="24" height="24" viewBox="-12.0 -12.0 24 24" fill="none" stroke="#dcdcdc" stroke-width="1.15" stroke-linecap="round" stroke-linejoin="round"><rect x="-5.5" y="-3.5" width="9" height="8.5" stroke-width="1.1"/><rect x="1.5" y="-6" width="4.5" height="4.5" fill="#dcdcdc" stroke="none"/></svg><svg class="i" style="left:820.0px;top:157.0px" width="24" height="24" viewBox="-12.0 -12.0 24 24" fill="none" stroke="#dcdcdc" stroke-width="1.15" stroke-linecap="round" stroke-linejoin="round"><rect x="-5.5" y="-5" width="9" height="8.5" stroke-width="1.1"/><rect x="1.5" y="1.5" width="4.5" height="4.5" fill="#dcdcdc" stroke="none"/></svg><div class="t" style="left:847px;top:145.87px;font-size:12.3px;color:#dcdcdc;letter-spacing:0.003px;">0.0 "</div><div class="t" style="left:847px;top:162.77px;font-size:12.3px;color:#dcdcdc;letter-spacing:0.003px;">0.0 "</div><div class="a" style="left:934px;top:148px;width:24px;height:24px;background:#1f4a7f;border-radius:4px"></div><svg class="i" style="left:934.0px;top:148.0px" width="24" height="24" viewBox="-12.0 -12.0 24 24" fill="none" stroke="#dcdcdc" stroke-width="1.15" stroke-linecap="round" stroke-linejoin="round"><path d="M-7 -1 A7 7 0 0 1 0 -7" stroke="#d5e4f7" stroke-width="1.5"/><path d="M0 7 A7 7 0 0 1 7 0" stroke="#d5e4f7" stroke-width="1.2"/><path d="M-4 1.5 L-0.5 -2.5 L-0.5 1.5Z M4 7.5 L7.5 3.5 L7.5 7.5Z" fill="#d5e4f7" stroke="none"/></svg><div class="sep" style="left:967px;top:145px;height:30px"></div><svg class="i" style="left:972.0px;top:148.0px" width="24" height="24" viewBox="-12.0 -12.0 24 24" fill="none" stroke="#dcdcdc" stroke-width="1.1" stroke-linecap="round" stroke-linejoin="round"><path d="M0 -8 L4.5 0.5 Q5 4 2.5 6 H-2.5 Q-5 4 -4.5 0.5Z"/><path d="M0 -8 V0.5"/><circle cx="0" cy="1.8" r="1.3"/><path d="M-3.5 8 H3.5" /></svg><div class="a" style="left:996px;top:148px;width:85px;height:24px;background:#262626;border-radius:3px;box-shadow:inset 0 0 0 1px #4d4d4d"></div><div class="t" style="left:1002.5px;top:155.13px;font-size:12.8px;color:#dcdcdc;letter-spacing:-0.248px;">Keine</div><svg class="i" style="left:1060.0px;top:148.5px" width="24" height="24" viewBox="-12.0 -12.0 24 24" fill="none" stroke="#dcdcdc" stroke-width="1.4" stroke-linecap="round" stroke-linejoin="round"><path d="M-3.3 -1.7 L0 1.7 L3.3 -1.7"/></svg><div class="a" style="left:1088px;top:148px;width:105px;height:24px;background:#262626;border-radius:3px;box-shadow:inset 0 0 0 1px #4d4d4d"></div><div class="a" style="left:1176px;top:149px;width:16px;height:22px;background:#3a3a3a;border-radius:0 3px 3px 0"></div><div class="a" style="left:1091px;top:159.2px;width:85px;height:1.6px;background:#a8a8a8;"></div><svg class="i" style="left:1172.0px;top:148.5px" width="24" height="24" viewBox="-12.0 -12.0 24 24" fill="none" stroke="#dcdcdc" stroke-width="1.4" stroke-linecap="round" stroke-linejoin="round"><path d="M-3.3 -1.7 L0 1.7 L3.3 -1.7"/></svg><svg class="i" style="left:1203.0px;top:148.0px" width="24" height="24" viewBox="-12.0 -12.0 24 24" fill="none" stroke="#dcdcdc" stroke-width="1.15" stroke-linecap="round" stroke-linejoin="round"><path d="M-6.5 7.5 Q2 9.5 5.5 2 Q7.5 -3.5 5 -8.5 Q4.5 -3 0.5 -1.5 Q-3 -0.5 -2.8 2.8 Q-2 6 -6.5 7.5Z" fill="#dcdcdc" stroke="none"/><circle cx="1.5" cy="-3.6" r="2.4" fill="#262626" stroke="#dcdcdc" stroke-width="0.9"/><path d="M-1.5 -0.5 L5.5 -8" stroke="#dcdcdc" stroke-width="0.9"/><circle cx="5.6" cy="-8" r="0.9" fill="#dcdcdc" stroke="none"/></svg><div class="sep" style="left:1233px;top:145px;height:30px"></div><svg class="i" style="left:1242.0px;top:148.0px" width="24" height="24" viewBox="-12.0 -12.0 24 24" fill="none" stroke="#dcdcdc" stroke-width="1.15" stroke-linecap="round" stroke-linejoin="round"><path d="M-7.5 -4.5 V-7 H-5 M-7.5 4.5 V7 H-5 M4.5 7 H7 V4.5" stroke-width="0.9" stroke="#b0b0b0"/><rect x="-4" y="-3" width="5.5" height="5.5" stroke-width="1.1"/><circle cx="1.5" cy="2" r="2.8" stroke-width="1.1" fill="#262626"/><path d="M2.5 -8 L7.5 -2.5" stroke-width="2.2" stroke="#dcdcdc"/><path d="M7.2 -2.8 L8.3 -1.2" stroke-width="1"/></svg><svg class="i" style="left:1274.0px;top:148.0px" width="24" height="24" viewBox="-12.0 -12.0 24 24" fill="none" stroke="#5c5c5c" stroke-width="1.15" stroke-linecap="round" stroke-linejoin="round"><path d="M-7.5 -4.5 V-7 H-5 M-7.5 4.5 V7 H-5 M4.5 7 H7 V4.5" stroke-width="0.9"/><rect x="-4" y="-3" width="5.5" height="5.5" stroke-width="1.1"/><circle cx="1.5" cy="2" r="2.8" stroke-width="1.1" fill="#262626"/><path d="M3.5 -3.5 L8 -8" stroke-width="1"/></svg><div class="sep" style="left:1306px;top:145px;height:30px"></div><svg class="i" style="left:1315.0px;top:148.0px" width="24" height="24" viewBox="-12.0 -12.0 24 24" fill="none" stroke="#dcdcdc" stroke-width="1.15" stroke-linecap="round" stroke-linejoin="round"><path d="M-7 -7.5 H7 M-7 -4.5 H7 M-7 -1.5 H7 M-7 1.5 H7 M-7 4.5 H7 M-7 7.5 H7" stroke-width="1.1" stroke-linecap="butt" stroke="#ececec"/><circle cx="2.5" cy="0" r="3.8" fill="#17385f" stroke="#cfe0f5" stroke-width="1"/><path d="M4 0 H0 L4 -4Z" fill="#e0e0e0" stroke="none" transform="translate(7 10.5)"/></svg><div class="sep" style="left:1347px;top:145px;height:30px"></div><svg class="i" style="left:1356.0px;top:148.0px" width="24" height="24" viewBox="-12.0 -12.0 24 24" fill="none" stroke="#dcdcdc" stroke-width="1.15" stroke-linecap="round" stroke-linejoin="round"><path d="M-8 3 L-1 0 L7 3 L-1 6.5Z M-8 0 L-1 -3 L7 0" stroke-width="1.1"/><path d="M-8 -3 L-1 -6.5 L7 -3 L-1 0.5Z" fill="#dcdcdc" stroke-width="1"/><path d="M7 -5 V-9 M5.3 -7.3 L7 -9.2 L8.7 -7.3" stroke-width="1"/></svg><svg class="i" style="left:1388.0px;top:148.0px" width="24" height="24" viewBox="-12.0 -12.0 24 24" fill="none" stroke="#5c5c5c" stroke-width="1.15" stroke-linecap="round" stroke-linejoin="round"><path d="M-8 -3 L-1 -6.5 L7 -3 L-1 0.5Z M-8 0 L-1 3 L7 0" stroke-width="1.1"/><path d="M-8 3 L-1 0 L7 3 L-1 6.5Z" fill="#5c5c5c" stroke-width="1"/><path d="M7 5 V9 M5.3 7.3 L7 9.2 L8.7 7.3" stroke-width="1"/></svg><div class="sep" style="left:1420px;top:145px;height:30px"></div><svg class="i" style="left:1429.0px;top:148.0px" width="24" height="24" viewBox="-12.0 -12.0 24 24" fill="none" stroke="#dcdcdc" stroke-width="1.15" stroke-linecap="round" stroke-linejoin="round"><circle cx="-0.5" cy="1" r="6.3" stroke-width="1.1"/><circle cx="-0.5" cy="-5.3" r="1.4" fill="#262626" stroke-width="0.9"/><circle cx="-6.8" cy="1" r="1.4" fill="#262626" stroke-width="0.9"/><circle cx="5.8" cy="1" r="1.4" fill="#262626" stroke-width="0.9"/><circle cx="-0.5" cy="7.3" r="1.4" fill="#262626" stroke-width="0.9"/><path d="M3.5 -7.5 H9 M3.5 -5 H9 M7.8 -8.8 L9.2 -7.5 M4.7 -3.7 L3.3 -5" stroke-width="0.9"/></svg>
<div class="a" style="left:4px;top:182px;width:33px;height:859px;background:#262626;"></div><div class="a" style="left:37px;top:182px;width:1px;height:859px;background:#454545;"></div><div class="a" style="left:9px;top:187px;width:24px;height:24px;background:#1f4a7f;border-radius:4px"></div><svg class="i" style="left:9.0px;top:187.0px" width="24" height="24" viewBox="-12.0 -12.0 24 24" fill="none" stroke="#dcdcdc" stroke-width="1.15" stroke-linecap="round" stroke-linejoin="round"><path d="M-4.5 -7.5 V6 L-1.2 3 L1.2 8 L3.4 7 L1 2.2 L5.5 2.2Z" fill="#e8f0fb" stroke="none"/><path d="M4.5 0 H0 L4.5 -4.5Z" fill="#e0e0e0" stroke="none" transform="translate(6.5 10.5)"/></svg><svg class="i" style="left:9.0px;top:219.0px" width="24" height="24" viewBox="-12.0 -12.0 24 24" fill="none" stroke="#dcdcdc" stroke-width="1.15" stroke-linecap="round" stroke-linejoin="round"><path d="M-8 5 Q-6 -6 5 -9" stroke="#9a9a9a" stroke-width="1"/><rect x="-5.2" y="-6.2" width="3.4" height="3.4" stroke-width="1"/><path d="M-1.5 -3 V6.5 L1 4.2 L3 8 L4.5 7.2 L2.7 3.5 L6 3.5Z" fill="#e4e4e4" stroke="none"/><path d="M4.5 0 H0 L4.5 -4.5Z" fill="#e0e0e0" stroke="none" transform="translate(6.5 10.5)"/></svg><div class="a" style="left:9px;top:251px;width:23px;height:1px;background:#454545;"></div><svg class="i" style="left:9.0px;top:260.0px" width="24" height="24" viewBox="-12.0 -12.0 24 24" fill="none" stroke="#dcdcdc" stroke-width="1.15" stroke-linecap="round" stroke-linejoin="round"><path d="M-3.5 -8 V4 H7.5 M-7.5 -4 H3.5 V8" stroke-width="1.8" stroke-linecap="butt" stroke-linejoin="miter"/><path d="M4.5 0 H0 L4.5 -4.5Z" fill="#e0e0e0" stroke="none" transform="translate(6.5 10.5)"/></svg><svg class="i" style="left:9.0px;top:293.0px" width="24" height="24" viewBox="-12.0 -12.0 24 24" fill="none" stroke="#dcdcdc" stroke-width="1.3" stroke-linecap="round" stroke-linejoin="round"><circle cx="-1.3" cy="-1.5" r="6.6"/><path d="M3.6 3.4 L8.3 8" stroke-width="1.9"/><path d="M4.5 0 H0 L4.5 -4.5Z" fill="#e0e0e0" stroke="none" transform="translate(6.5 10.5)"/></svg><div class="a" style="left:9px;top:324px;width:23px;height:1px;background:#454545;"></div><svg class="i" style="left:9.0px;top:332.0px" width="24" height="24" viewBox="-12.0 -12.0 24 24" fill="none" stroke="#dcdcdc" stroke-width="1.15" stroke-linecap="round" stroke-linejoin="round"><path d="M-8 -3.5 H-2 M-5 -6.5 V-0.5" stroke-width="1.1"/><path d="M-4.8 2.5 V7 H-2.4 V3.5 H0 V7 H2.4 V3.5 H4.8 V7 H7.2 V4" stroke-width="1" stroke="#a8a8a8" stroke-linejoin="round"/><path d="M4.5 0 H0 L4.5 -4.5Z" fill="#e0e0e0" stroke="none" transform="translate(6.5 10.5)"/></svg><svg class="i" style="left:9.0px;top:365.0px" width="24" height="24" viewBox="-12.0 -12.0 24 24" fill="none" stroke="#dcdcdc" stroke-width="1.15" stroke-linecap="round" stroke-linejoin="round"><path d="M7.5 -8.5 L-1 0.5 L1.5 3Z" fill="#e4e4e4" stroke="none"/><path d="M-2 1.5 L0.5 4 Q-2 8 -8 7.5 Q-5 5.5 -4.5 3.5 Q-4 1.5 -2 1.5Z" fill="#e4e4e4" stroke="none"/><path d="M4.5 0 H0 L4.5 -4.5Z" fill="#e0e0e0" stroke="none" transform="translate(6.5 10.5)"/></svg><svg class="i" style="left:9.0px;top:397.0px" width="24" height="24" viewBox="-12.0 -12.0 24 24" fill="none" stroke="#dcdcdc" stroke-width="1.2" stroke-linecap="round" stroke-linejoin="round"><rect x="-6.8" y="-6.8" width="13.6" height="13.6"/><path d="M4.5 0 H0 L4.5 -4.5Z" fill="#e0e0e0" stroke="none" transform="translate(6.5 10.5)"/></svg><svg class="i" style="left:9.0px;top:429.0px" width="24" height="24" viewBox="-12.0 -12.0 24 24" fill="none" stroke="#dcdcdc" stroke-width="1.3" stroke-linecap="round" stroke-linejoin="round"><circle cx="-0.5" cy="0" r="7.5"/><path d="M4.5 0 H0 L4.5 -4.5Z" fill="#e0e0e0" stroke="none" transform="translate(6.5 10.5)"/></svg><svg class="i" style="left:9.0px;top:462.0px" width="24" height="24" viewBox="-12.0 -12.0 24 24" fill="none" stroke="#dcdcdc" stroke-width="1.3" stroke-linecap="round" stroke-linejoin="round"><path d="M-4.5 -7 H3.5 L7.5 0 L3.5 7 H-4.5 L-8.5 0Z"/><path d="M4.5 0 H0 L4.5 -4.5Z" fill="#e0e0e0" stroke="none" transform="translate(6.5 10.5)"/></svg><div class="a" style="left:9px;top:493px;width:23px;height:1px;background:#454545;"></div><svg class="i" style="left:9.0px;top:502.0px" width="24" height="24" viewBox="-12.0 -12.0 24 24" fill="none" stroke="#dcdcdc" stroke-width="1.15" stroke-linecap="round" stroke-linejoin="round"><path d="M-6.3 7 L-0.4 -7.5 H0.4 L6.3 7 M-4 2.2 H4" stroke-width="1.9" stroke-linejoin="miter"/><path d="M4.5 0 H0 L4.5 -4.5Z" fill="#e0e0e0" stroke="none" transform="translate(6.5 10.5)"/></svg><div class="a" style="left:9px;top:534px;width:23px;height:1px;background:#454545;"></div><svg class="i" style="left:9.0px;top:543.0px" width="24" height="24" viewBox="-12.0 -12.0 24 24" fill="none" stroke="#dcdcdc" stroke-width="1.15" stroke-linecap="round" stroke-linejoin="round"><path d="M-5.5 5.5 L5.5 -5.5" stroke-width="1.2"/><path d="M-6.6 4.4 L-4.4 6.6 M4.4 -6.6 L6.6 -4.4" stroke-width="1"/><path d="M4.5 0 H0 L4.5 -4.5Z" fill="#e0e0e0" stroke="none" transform="translate(6.5 10.5)"/></svg><svg class="i" style="left:9.0px;top:576.0px" width="24" height="24" viewBox="-12.0 -12.0 24 24" fill="none" stroke="#dcdcdc" stroke-width="1.15" stroke-linecap="round" stroke-linejoin="round"><path d="M-5 -5 L5 5" stroke="#cfcfcf" stroke-width="1.2"/><rect x="-2.2" y="-2.2" width="4.4" height="4.4" transform="translate(-5 -5) rotate(45)" fill="#e8703a" stroke="#f2f2f2" stroke-width="0.9"/><rect x="-2.6" y="-2.6" width="5.2" height="5.2" transform="translate(4.5 5) rotate(45)" fill="#e8703a" stroke="#f2f2f2" stroke-width="0.9"/><path d="M1 -7 L5 -4.5" stroke="#a0302a" stroke-width="1" stroke-dasharray="1.5 1.5"/><path d="M4.5 0 H0 L4.5 -4.5Z" fill="#e0e0e0" stroke="none" transform="translate(6.5 10.5)"/></svg><div class="a" style="left:9px;top:607px;width:23px;height:1px;background:#454545;"></div><svg class="i" style="left:9.0px;top:616.0px" width="24" height="24" viewBox="-12.0 -12.0 24 24" fill="none" stroke="#dcdcdc" stroke-width="1.15" stroke-linecap="round" stroke-linejoin="round"><rect x="-5" y="-4.5" width="12.5" height="12" fill="#cfcfcf" stroke="none"/><rect x="-8" y="-8" width="13" height="12.5" fill="#262626" stroke="#f0f0f0" stroke-width="1.4"/><path d="M4.5 0 H0 L4.5 -4.5Z" fill="#e0e0e0" stroke="none" transform="translate(6.5 10.5)"/></svg><svg class="i" style="left:9.0px;top:648.0px" width="24" height="24" viewBox="-12.0 -12.0 24 24" fill="none" stroke="#dcdcdc" stroke-width="1.15" stroke-linecap="round" stroke-linejoin="round"><rect x="-7.8" y="-7.8" width="15.6" height="15.6" rx="1.2" fill="#f0f0f0" stroke="none"/><rect x="-6.80" y="-6.80" width="2.72" height="2.72" fill="#f0f0f0" stroke="none"/><rect x="-6.80" y="-4.08" width="2.72" height="2.72" fill="#262626" stroke="none"/><rect x="-6.80" y="-1.36" width="2.72" height="2.72" fill="#f0f0f0" stroke="none"/><rect x="-6.80" y="1.36" width="2.72" height="2.72" fill="#262626" stroke="none"/><rect x="-6.80" y="4.08" width="2.72" height="2.72" fill="#f0f0f0" stroke="none"/><rect x="-4.08" y="-6.80" width="2.72" height="2.72" fill="#262626" stroke="none"/><rect x="-4.08" y="-4.08" width="2.72" height="2.72" fill="#f0f0f0" stroke="none"/><rect x="-4.08" y="-1.36" width="2.72" height="2.72" fill="#262626" stroke="none"/><rect x="-4.08" y="1.36" width="2.72" height="2.72" fill="#f0f0f0" stroke="none"/><rect x="-4.08" y="4.08" width="2.72" height="2.72" fill="#262626" stroke="none"/><rect x="-1.36" y="-6.80" width="2.72" height="2.72" fill="#f0f0f0" stroke="none"/><rect x="-1.36" y="-4.08" width="2.72" height="2.72" fill="#262626" stroke="none"/><rect x="-1.36" y="-1.36" width="2.72" height="2.72" fill="#f0f0f0" stroke="none"/><rect x="-1.36" y="1.36" width="2.72" height="2.72" fill="#262626" stroke="none"/><rect x="-1.36" y="4.08" width="2.72" height="2.72" fill="#f0f0f0" stroke="none"/><rect x="1.36" y="-6.80" width="2.72" height="2.72" fill="#262626" stroke="none"/><rect x="1.36" y="-4.08" width="2.72" height="2.72" fill="#f0f0f0" stroke="none"/><rect x="1.36" y="-1.36" width="2.72" height="2.72" fill="#262626" stroke="none"/><rect x="1.36" y="1.36" width="2.72" height="2.72" fill="#f0f0f0" stroke="none"/><rect x="1.36" y="4.08" width="2.72" height="2.72" fill="#262626" stroke="none"/><rect x="4.08" y="-6.80" width="2.72" height="2.72" fill="#f0f0f0" stroke="none"/><rect x="4.08" y="-4.08" width="2.72" height="2.72" fill="#262626" stroke="none"/><rect x="4.08" y="-1.36" width="2.72" height="2.72" fill="#f0f0f0" stroke="none"/><rect x="4.08" y="1.36" width="2.72" height="2.72" fill="#262626" stroke="none"/><rect x="4.08" y="4.08" width="2.72" height="2.72" fill="#f0f0f0" stroke="none"/></svg><div class="a" style="left:9px;top:680px;width:23px;height:1px;background:#454545;"></div><svg class="i" style="left:9.0px;top:689.0px" width="24" height="24" viewBox="-12.0 -12.0 24 24" fill="none" stroke="#dcdcdc" stroke-width="1.15" stroke-linecap="round" stroke-linejoin="round"><path d="M-7.5 7.5 L-6.5 4 L1 -3.5 L3.5 -1 L-4 6.5Z" fill="#e8703a" stroke="#f2f2f2" stroke-width="0.9"/><path d="M0 -4.5 L4.5 0" stroke="#f2f2f2" stroke-width="1.6"/><path d="M2 -3.5 L4.5 -6.5 Q6.5 -8.5 8 -7 Q9 -5 7 -3.5 L4 -1Z" fill="#dfe6ee" stroke="none"/><path d="M4.5 0 H0 L4.5 -4.5Z" fill="#e0e0e0" stroke="none" transform="translate(6.5 10.5)"/></svg><svg class="i" style="left:9.0px;top:722.0px" width="24" height="24" viewBox="-12.0 -12.0 24 24" fill="none" stroke="#dcdcdc" stroke-width="1.15" stroke-linecap="round" stroke-linejoin="round"><path d="M-2.5 -7.5 L6 0.5 L-1 7 Q-2 7.8 -3 7 L-7.5 2.5 Q-8.3 1.5 -7.5 0.5Z" fill="#262626" stroke="#f2f2f2" stroke-width="1.2"/><path d="M-6.5 1 H4.5 L-1.5 6.5 Q-2 6.9 -2.6 6.4Z" fill="#d9534f" stroke="none"/><path d="M-5 -8.5 L-0.5 -3.5" stroke="#f2f2f2" stroke-width="1.2"/><path d="M7 3.5 Q9 6 8.2 7.2 Q7 8.3 5.8 7.2 Q5 6 7 3.5Z" fill="#d9534f" stroke="none"/><path d="M4.5 0 H0 L4.5 -4.5Z" fill="#e0e0e0" stroke="none" transform="translate(6.5 10.5)"/></svg><div class="a" style="left:9px;top:753px;width:23px;height:1px;background:#454545;"></div><svg class="i" style="left:9.0px;top:761.0px" width="24" height="24" viewBox="-12.0 -12.0 24 24" fill="none" stroke="#dcdcdc" stroke-width="1.15" stroke-linecap="round" stroke-linejoin="round"><path d="M-7 8.5 Q2.5 10.5 6 2.5 Q8 -3.5 5.5 -9 Q5 -3 0.5 -1.5 Q-3.2 -0.5 -3 3 Q-2.2 6.5 -7 8.5Z" fill="#e4e4e4" stroke="none"/><circle cx="1.6" cy="-3.8" r="2.5" fill="#262626" stroke="#e4e4e4" stroke-width="0.9"/><path d="M-1.5 -0.5 L6 -8.5" stroke="#e4e4e4" stroke-width="0.9"/><circle cx="6" cy="-8.6" r="1" fill="#e4e4e4" stroke="none"/></svg>
<div class="a" style="left:38px;top:182px;width:1532px;height:30px;background:#262626;"></div><div class="a" style="left:42px;top:186px;width:150px;height:26px;background:#1f4a7f;border-radius:6px 6px 0 0"></div><svg class="i" style="left:45.0px;top:185.0px" width="24" height="24" viewBox="-12.0 -12.0 24 24" fill="none" stroke="#dcdcdc" stroke-width="1.15" stroke-linecap="round" stroke-linejoin="round"><path d="M-5 4 H5 A3 3 0 0 0 5.3 -2 A4.3 4.3 0 0 0 -3 -3.2 A3.7 3.7 0 0 0 -5 4Z" fill="#e6e6e6" stroke="none"/></svg><div class="t" style="left:72px;top:191.73px;font-size:13.4px;color:#e8eef8;letter-spacing:-0.169px;">Fredrick Junior...</div><div class="a" style="left:196px;top:186px;width:24px;height:22px;background:#3a3a3a;border-radius:4px"></div><div class="a" style="left:203px;top:196px;width:2.4px;height:2.4px;background:#e0e0e0;border-radius:2px;box-shadow:4px 0 0 #e0e0e0,8px 0 0 #e0e0e0"></div>
<div class="a" style="left:38px;top:212px;width:1532px;height:14px;background:#262626;"></div><div class="a" style="left:38px;top:211px;width:1532px;height:1px;background:#3a3a3a;"></div><div class="a" style="left:40px;top:226px;width:14px;height:764px;background:#262626;"></div><div class="a" style="left:38px;top:212px;width:2px;height:778px;background:#262626;"></div><svg class="i" style="left:40px;top:212px" width="1530" height="14" viewBox="40 212 1530 14" shape-rendering="crispEdges"><path d="M42 215 H50 M44 213 V221" stroke="#8a8a8a" stroke-width="1" stroke-dasharray="1 1"/><path d="M44.5 215.5 L49 220" stroke="#cfcfcf" stroke-width="1" shape-rendering="auto"/><path d="M54.5 222 V226" stroke="#8c8c8c" stroke-width="1"/><path d="M64.5 222 V226" stroke="#8c8c8c" stroke-width="1"/><path d="M74.5 222 V226" stroke="#8c8c8c" stroke-width="1"/><path d="M83.5 212 V226" stroke="#8c8c8c" stroke-width="1"/><path d="M93.5 222 V226" stroke="#8c8c8c" stroke-width="1"/><path d="M102.5 222 V226" stroke="#8c8c8c" stroke-width="1"/><path d="M112.5 222 V226" stroke="#8c8c8c" stroke-width="1"/><path d="M121.5 220 V226" stroke="#8c8c8c" stroke-width="1"/><path d="M131.5 222 V226" stroke="#8c8c8c" stroke-width="1"/><path d="M141.5 222 V226" stroke="#8c8c8c" stroke-width="1"/><path d="M150.5 222 V226" stroke="#8c8c8c" stroke-width="1"/><path d="M160.5 212 V226" stroke="#8c8c8c" stroke-width="1"/><path d="M170.5 222 V226" stroke="#8c8c8c" stroke-width="1"/><path d="M179.5 222 V226" stroke="#8c8c8c" stroke-width="1"/><path d="M189.5 222 V226" stroke="#8c8c8c" stroke-width="1"/><path d="M198.5 220 V226" stroke="#8c8c8c" stroke-width="1"/><path d="M208.5 222 V226" stroke="#8c8c8c" stroke-width="1"/><path d="M218.5 222 V226" stroke="#8c8c8c" stroke-width="1"/><path d="M227.5 222 V226" stroke="#8c8c8c" stroke-width="1"/><path d="M237.5 212 V226" stroke="#8c8c8c" stroke-width="1"/><path d="M246.5 222 V226" stroke="#8c8c8c" stroke-width="1"/><path d="M256.5 222 V226" stroke="#8c8c8c" stroke-width="1"/><path d="M266.5 222 V226" stroke="#8c8c8c" stroke-width="1"/><path d="M275.5 220 V226" stroke="#8c8c8c" stroke-width="1"/><path d="M285.5 222 V226" stroke="#8c8c8c" stroke-width="1"/><path d="M294.5 222 V226" stroke="#8c8c8c" stroke-width="1"/><path d="M304.5 222 V226" stroke="#8c8c8c" stroke-width="1"/><path d="M314.5 212 V226" stroke="#8c8c8c" stroke-width="1"/><path d="M323.5 222 V226" stroke="#8c8c8c" stroke-width="1"/><path d="M333.5 222 V226" stroke="#8c8c8c" stroke-width="1"/><path d="M342.5 222 V226" stroke="#8c8c8c" stroke-width="1"/><path d="M352.5 220 V226" stroke="#8c8c8c" stroke-width="1"/><path d="M362.5 222 V226" stroke="#8c8c8c" stroke-width="1"/><path d="M371.5 222 V226" stroke="#8c8c8c" stroke-width="1"/><path d="M381.5 222 V226" stroke="#8c8c8c" stroke-width="1"/><path d="M390.5 212 V226" stroke="#8c8c8c" stroke-width="1"/><path d="M400.5 222 V226" stroke="#8c8c8c" stroke-width="1"/><path d="M410.5 222 V226" stroke="#8c8c8c" stroke-width="1"/><path d="M419.5 222 V226" stroke="#8c8c8c" stroke-width="1"/><path d="M429.5 220 V226" stroke="#8c8c8c" stroke-width="1"/><path d="M438.5 222 V226" stroke="#8c8c8c" stroke-width="1"/><path d="M448.5 222 V226" stroke="#8c8c8c" stroke-width="1"/><path d="M458.5 222 V226" stroke="#8c8c8c" stroke-width="1"/><path d="M467.5 212 V226" stroke="#8c8c8c" stroke-width="1"/><path d="M477.5 222 V226" stroke="#8c8c8c" stroke-width="1"/><path d="M486.5 222 V226" stroke="#8c8c8c" stroke-width="1"/><path d="M496.5 222 V226" stroke="#8c8c8c" stroke-width="1"/><path d="M506.5 220 V226" stroke="#8c8c8c" stroke-width="1"/><path d="M515.5 222 V226" stroke="#8c8c8c" stroke-width="1"/><path d="M525.5 222 V226" stroke="#8c8c8c" stroke-width="1"/><path d="M534.5 222 V226" stroke="#8c8c8c" stroke-width="1"/><path d="M544.5 212 V226" stroke="#8c8c8c" stroke-width="1"/><path d="M553.5 222 V226" stroke="#8c8c8c" stroke-width="1"/><path d="M563.5 222 V226" stroke="#8c8c8c" stroke-width="1"/><path d="M573.5 222 V226" stroke="#8c8c8c" stroke-width="1"/><path d="M582.5 220 V226" stroke="#8c8c8c" stroke-width="1"/><path d="M592.5 222 V226" stroke="#8c8c8c" stroke-width="1"/><path d="M601.5 222 V226" stroke="#8c8c8c" stroke-width="1"/><path d="M611.5 222 V226" stroke="#8c8c8c" stroke-width="1"/><path d="M621.5 212 V226" stroke="#8c8c8c" stroke-width="1"/><path d="M630.5 222 V226" stroke="#8c8c8c" stroke-width="1"/><path d="M640.5 222 V226" stroke="#8c8c8c" stroke-width="1"/><path d="M649.5 222 V226" stroke="#8c8c8c" stroke-width="1"/><path d="M659.5 220 V226" stroke="#8c8c8c" stroke-width="1"/><path d="M669.5 222 V226" stroke="#8c8c8c" stroke-width="1"/><path d="M678.5 222 V226" stroke="#8c8c8c" stroke-width="1"/><path d="M688.5 222 V226" stroke="#8c8c8c" stroke-width="1"/><path d="M697.5 212 V226" stroke="#8c8c8c" stroke-width="1"/><path d="M707.5 222 V226" stroke="#8c8c8c" stroke-width="1"/><path d="M717.5 222 V226" stroke="#8c8c8c" stroke-width="1"/><path d="M726.5 222 V226" stroke="#8c8c8c" stroke-width="1"/><path d="M736.5 220 V226" stroke="#8c8c8c" stroke-width="1"/><path d="M745.5 222 V226" stroke="#8c8c8c" stroke-width="1"/><path d="M755.5 222 V226" stroke="#8c8c8c" stroke-width="1"/><path d="M765.5 222 V226" stroke="#8c8c8c" stroke-width="1"/><path d="M774.5 212 V226" stroke="#8c8c8c" stroke-width="1"/><path d="M784.5 222 V226" stroke="#8c8c8c" stroke-width="1"/><path d="M793.5 222 V226" stroke="#8c8c8c" stroke-width="1"/><path d="M803.5 222 V226" stroke="#8c8c8c" stroke-width="1"/><path d="M813.5 220 V226" stroke="#8c8c8c" stroke-width="1"/><path d="M822.5 222 V226" stroke="#8c8c8c" stroke-width="1"/><path d="M832.5 222 V226" stroke="#8c8c8c" stroke-width="1"/><path d="M841.5 222 V226" stroke="#8c8c8c" stroke-width="1"/><path d="M851.5 212 V226" stroke="#8c8c8c" stroke-width="1"/><path d="M861.5 222 V226" stroke="#8c8c8c" stroke-width="1"/><path d="M870.5 222 V226" stroke="#8c8c8c" stroke-width="1"/><path d="M880.5 222 V226" stroke="#8c8c8c" stroke-width="1"/><path d="M889.5 220 V226" stroke="#8c8c8c" stroke-width="1"/><path d="M899.5 222 V226" stroke="#8c8c8c" stroke-width="1"/><path d="M909.5 222 V226" stroke="#8c8c8c" stroke-width="1"/><path d="M918.5 222 V226" stroke="#8c8c8c" stroke-width="1"/><path d="M928.5 212 V226" stroke="#8c8c8c" stroke-width="1"/><path d="M937.5 222 V226" stroke="#8c8c8c" stroke-width="1"/><path d="M947.5 222 V226" stroke="#8c8c8c" stroke-width="1"/><path d="M957.5 222 V226" stroke="#8c8c8c" stroke-width="1"/><path d="M966.5 220 V226" stroke="#8c8c8c" stroke-width="1"/><path d="M976.5 222 V226" stroke="#8c8c8c" stroke-width="1"/><path d="M985.5 222 V226" stroke="#8c8c8c" stroke-width="1"/><path d="M995.5 222 V226" stroke="#8c8c8c" stroke-width="1"/><path d="M1005.5 212 V226" stroke="#8c8c8c" stroke-width="1"/><path d="M1014.5 222 V226" stroke="#8c8c8c" stroke-width="1"/><path d="M1024.5 222 V226" stroke="#8c8c8c" stroke-width="1"/><path d="M1034.5 222 V226" stroke="#8c8c8c" stroke-width="1"/><path d="M1043.5 220 V226" stroke="#8c8c8c" stroke-width="1"/><path d="M1053.5 222 V226" stroke="#8c8c8c" stroke-width="1"/><path d="M1062.5 222 V226" stroke="#8c8c8c" stroke-width="1"/><path d="M1072.5 222 V226" stroke="#8c8c8c" stroke-width="1"/><path d="M1082.5 212 V226" stroke="#8c8c8c" stroke-width="1"/><path d="M1091.5 222 V226" stroke="#8c8c8c" stroke-width="1"/><path d="M1101.5 222 V226" stroke="#8c8c8c" stroke-width="1"/><path d="M1110.5 222 V226" stroke="#8c8c8c" stroke-width="1"/><path d="M1120.5 220 V226" stroke="#8c8c8c" stroke-width="1"/><path d="M1130.5 222 V226" stroke="#8c8c8c" stroke-width="1"/><path d="M1139.5 222 V226" stroke="#8c8c8c" stroke-width="1"/><path d="M1149.5 222 V226" stroke="#8c8c8c" stroke-width="1"/><path d="M1158.5 212 V226" stroke="#8c8c8c" stroke-width="1"/><path d="M1168.5 222 V226" stroke="#8c8c8c" stroke-width="1"/><path d="M1178.5 222 V226" stroke="#8c8c8c" stroke-width="1"/><path d="M1187.5 222 V226" stroke="#8c8c8c" stroke-width="1"/><path d="M1197.5 220 V226" stroke="#8c8c8c" stroke-width="1"/><path d="M1206.5 222 V226" stroke="#8c8c8c" stroke-width="1"/><path d="M1216.5 222 V226" stroke="#8c8c8c" stroke-width="1"/><path d="M1226.5 222 V226" stroke="#8c8c8c" stroke-width="1"/><path d="M1235.5 212 V226" stroke="#8c8c8c" stroke-width="1"/><path d="M1245.5 222 V226" stroke="#8c8c8c" stroke-width="1"/><path d="M1254.5 222 V226" stroke="#8c8c8c" stroke-width="1"/><path d="M1264.5 222 V226" stroke="#8c8c8c" stroke-width="1"/><path d="M1274.5 220 V226" stroke="#8c8c8c" stroke-width="1"/><path d="M1283.5 222 V226" stroke="#8c8c8c" stroke-width="1"/><path d="M1293.5 222 V226" stroke="#8c8c8c" stroke-width="1"/><path d="M1302.5 222 V226" stroke="#8c8c8c" stroke-width="1"/><path d="M1312.5 212 V226" stroke="#8c8c8c" stroke-width="1"/><path d="M1322.5 222 V226" stroke="#8c8c8c" stroke-width="1"/><path d="M1331.5 222 V226" stroke="#8c8c8c" stroke-width="1"/><path d="M1341.5 222 V226" stroke="#8c8c8c" stroke-width="1"/><path d="M1350.5 220 V226" stroke="#8c8c8c" stroke-width="1"/><path d="M1360.5 222 V226" stroke="#8c8c8c" stroke-width="1"/><path d="M1370.5 222 V226" stroke="#8c8c8c" stroke-width="1"/><path d="M1379.5 222 V226" stroke="#8c8c8c" stroke-width="1"/><path d="M1389.5 212 V226" stroke="#8c8c8c" stroke-width="1"/><path d="M1398.5 222 V226" stroke="#8c8c8c" stroke-width="1"/><path d="M1408.5 222 V226" stroke="#8c8c8c" stroke-width="1"/><path d="M1418.5 222 V226" stroke="#8c8c8c" stroke-width="1"/><path d="M1427.5 220 V226" stroke="#8c8c8c" stroke-width="1"/><path d="M1437.5 222 V226" stroke="#8c8c8c" stroke-width="1"/><path d="M1446.5 222 V226" stroke="#8c8c8c" stroke-width="1"/><path d="M1456.5 222 V226" stroke="#8c8c8c" stroke-width="1"/><path d="M1466.5 212 V226" stroke="#8c8c8c" stroke-width="1"/><path d="M1475.5 222 V226" stroke="#8c8c8c" stroke-width="1"/><path d="M1485.5 222 V226" stroke="#8c8c8c" stroke-width="1"/><path d="M1494.5 222 V226" stroke="#8c8c8c" stroke-width="1"/><path d="M1504.5 220 V226" stroke="#8c8c8c" stroke-width="1"/><path d="M1514.5 222 V226" stroke="#8c8c8c" stroke-width="1"/><path d="M1523.5 222 V226" stroke="#8c8c8c" stroke-width="1"/><path d="M1533.5 222 V226" stroke="#8c8c8c" stroke-width="1"/><path d="M1542.5 212 V226" stroke="#8c8c8c" stroke-width="1"/><path d="M54.5 212 V226" stroke="#4a4a4a" stroke-width="1"/><path d="M1297.5 212 V226" stroke="#f0f0f0" stroke-width="1" stroke-dasharray="3 2"/></svg><div class="t" style="left:87.5px;top:212.3px;font-size:9.4px;color:#dcdcdc;font-weight:bold">1</div><div class="t" style="left:164.5px;top:212.3px;font-size:9.4px;color:#dcdcdc;font-weight:bold">2</div><div class="t" style="left:241.5px;top:212.3px;font-size:9.4px;color:#dcdcdc;font-weight:bold">3</div><div class="t" style="left:318.5px;top:212.3px;font-size:9.4px;color:#dcdcdc;font-weight:bold">4</div><div class="t" style="left:394.5px;top:212.3px;font-size:9.4px;color:#dcdcdc;font-weight:bold">5</div><div class="t" style="left:471.5px;top:212.3px;font-size:9.4px;color:#dcdcdc;font-weight:bold">6</div><div class="t" style="left:548.5px;top:212.3px;font-size:9.4px;color:#dcdcdc;font-weight:bold">7</div><div class="t" style="left:625.5px;top:212.3px;font-size:9.4px;color:#dcdcdc;font-weight:bold">8</div><div class="t" style="left:701.5px;top:212.3px;font-size:9.4px;color:#dcdcdc;font-weight:bold">9</div><div class="t" style="left:778.5px;top:212.3px;font-size:9.4px;color:#dcdcdc;font-weight:bold">10</div><div class="t" style="left:855.5px;top:212.3px;font-size:9.4px;color:#dcdcdc;font-weight:bold">11</div><div class="t" style="left:932.5px;top:212.3px;font-size:9.4px;color:#dcdcdc;font-weight:bold">12</div><div class="t" style="left:1009.5px;top:212.3px;font-size:9.4px;color:#dcdcdc;font-weight:bold">13</div><div class="t" style="left:1086.5px;top:212.3px;font-size:9.4px;color:#dcdcdc;font-weight:bold">14</div><div class="t" style="left:1162.5px;top:212.3px;font-size:9.4px;color:#dcdcdc;font-weight:bold">15</div><div class="t" style="left:1239.5px;top:212.3px;font-size:9.4px;color:#dcdcdc;font-weight:bold">16</div><div class="t" style="left:1316.5px;top:212.3px;font-size:9.4px;color:#dcdcdc;font-weight:bold">17</div><div class="t" style="left:1393.5px;top:212.3px;font-size:9.4px;color:#dcdcdc;font-weight:bold">18</div><div class="t" style="left:1470.5px;top:212.3px;font-size:9.4px;color:#dcdcdc;font-weight:bold">19</div><div class="t" style="left:1552px;top:214px;font-size:10px;color:#d0d0d0;font-weight:bold;font-size:9.5px">Zoll</div><svg class="i" style="left:40px;top:226px" width="14" height="764" viewBox="40 226 14 764" shape-rendering="crispEdges"><path d="M50 230.5 H54" stroke="#8c8c8c" stroke-width="1"/><path d="M48 239.5 H54" stroke="#8c8c8c" stroke-width="1"/><path d="M50 249.5 H54" stroke="#8c8c8c" stroke-width="1"/><path d="M50 259.5 H54" stroke="#8c8c8c" stroke-width="1"/><path d="M50 268.5 H54" stroke="#8c8c8c" stroke-width="1"/><path d="M40 278.5 H54" stroke="#8c8c8c" stroke-width="1"/><path d="M50 287.5 H54" stroke="#8c8c8c" stroke-width="1"/><path d="M50 297.5 H54" stroke="#8c8c8c" stroke-width="1"/><path d="M50 307.5 H54" stroke="#8c8c8c" stroke-width="1"/><path d="M48 316.5 H54" stroke="#8c8c8c" stroke-width="1"/><path d="M50 326.5 H54" stroke="#8c8c8c" stroke-width="1"/><path d="M50 335.5 H54" stroke="#8c8c8c" stroke-width="1"/><path d="M50 345.5 H54" stroke="#8c8c8c" stroke-width="1"/><path d="M40 355.5 H54" stroke="#8c8c8c" stroke-width="1"/><path d="M50 364.5 H54" stroke="#8c8c8c" stroke-width="1"/><path d="M50 374.5 H54" stroke="#8c8c8c" stroke-width="1"/><path d="M50 383.5 H54" stroke="#8c8c8c" stroke-width="1"/><path d="M48 393.5 H54" stroke="#8c8c8c" stroke-width="1"/><path d="M50 403.5 H54" stroke="#8c8c8c" stroke-width="1"/><path d="M50 412.5 H54" stroke="#8c8c8c" stroke-width="1"/><path d="M50 422.5 H54" stroke="#8c8c8c" stroke-width="1"/><path d="M40 431.5 H54" stroke="#8c8c8c" stroke-width="1"/><path d="M50 441.5 H54" stroke="#8c8c8c" stroke-width="1"/><path d="M50 451.5 H54" stroke="#8c8c8c" stroke-width="1"/><path d="M50 460.5 H54" stroke="#8c8c8c" stroke-width="1"/><path d="M48 470.5 H54" stroke="#8c8c8c" stroke-width="1"/><path d="M50 479.5 H54" stroke="#8c8c8c" stroke-width="1"/><path d="M50 489.5 H54" stroke="#8c8c8c" stroke-width="1"/><path d="M50 499.5 H54" stroke="#8c8c8c" stroke-width="1"/><path d="M40 508.5 H54" stroke="#8c8c8c" stroke-width="1"/><path d="M50 518.5 H54" stroke="#8c8c8c" stroke-width="1"/><path d="M50 527.5 H54" stroke="#8c8c8c" stroke-width="1"/><path d="M50 537.5 H54" stroke="#8c8c8c" stroke-width="1"/><path d="M48 547.5 H54" stroke="#8c8c8c" stroke-width="1"/><path d="M50 556.5 H54" stroke="#8c8c8c" stroke-width="1"/><path d="M50 566.5 H54" stroke="#8c8c8c" stroke-width="1"/><path d="M50 575.5 H54" stroke="#8c8c8c" stroke-width="1"/><path d="M40 585.5 H54" stroke="#8c8c8c" stroke-width="1"/><path d="M50 595.5 H54" stroke="#8c8c8c" stroke-width="1"/><path d="M50 604.5 H54" stroke="#8c8c8c" stroke-width="1"/><path d="M50 614.5 H54" stroke="#8c8c8c" stroke-width="1"/><path d="M48 623.5 H54" stroke="#8c8c8c" stroke-width="1"/><path d="M50 633.5 H54" stroke="#8c8c8c" stroke-width="1"/><path d="M50 643.5 H54" stroke="#8c8c8c" stroke-width="1"/><path d="M50 652.5 H54" stroke="#8c8c8c" stroke-width="1"/><path d="M40 662.5 H54" stroke="#8c8c8c" stroke-width="1"/><path d="M50 671.5 H54" stroke="#8c8c8c" stroke-width="1"/><path d="M50 681.5 H54" stroke="#8c8c8c" stroke-width="1"/><path d="M50 691.5 H54" stroke="#8c8c8c" stroke-width="1"/><path d="M48 700.5 H54" stroke="#8c8c8c" stroke-width="1"/><path d="M50 710.5 H54" stroke="#8c8c8c" stroke-width="1"/><path d="M50 719.5 H54" stroke="#8c8c8c" stroke-width="1"/><path d="M50 729.5 H54" stroke="#8c8c8c" stroke-width="1"/><path d="M40 739.5 H54" stroke="#8c8c8c" stroke-width="1"/><path d="M50 748.5 H54" stroke="#8c8c8c" stroke-width="1"/><path d="M50 758.5 H54" stroke="#8c8c8c" stroke-width="1"/><path d="M50 767.5 H54" stroke="#8c8c8c" stroke-width="1"/><path d="M48 777.5 H54" stroke="#8c8c8c" stroke-width="1"/><path d="M50 787.5 H54" stroke="#8c8c8c" stroke-width="1"/><path d="M50 796.5 H54" stroke="#8c8c8c" stroke-width="1"/><path d="M50 806.5 H54" stroke="#8c8c8c" stroke-width="1"/><path d="M40 815.5 H54" stroke="#8c8c8c" stroke-width="1"/><path d="M50 825.5 H54" stroke="#8c8c8c" stroke-width="1"/><path d="M50 835.5 H54" stroke="#8c8c8c" stroke-width="1"/><path d="M50 844.5 H54" stroke="#8c8c8c" stroke-width="1"/><path d="M48 854.5 H54" stroke="#8c8c8c" stroke-width="1"/><path d="M50 863.5 H54" stroke="#8c8c8c" stroke-width="1"/><path d="M50 873.5 H54" stroke="#8c8c8c" stroke-width="1"/><path d="M50 883.5 H54" stroke="#8c8c8c" stroke-width="1"/><path d="M40 892.5 H54" stroke="#8c8c8c" stroke-width="1"/><path d="M50 902.5 H54" stroke="#8c8c8c" stroke-width="1"/><path d="M50 911.5 H54" stroke="#8c8c8c" stroke-width="1"/><path d="M50 921.5 H54" stroke="#8c8c8c" stroke-width="1"/><path d="M48 931.5 H54" stroke="#8c8c8c" stroke-width="1"/><path d="M50 940.5 H54" stroke="#8c8c8c" stroke-width="1"/><path d="M50 950.5 H54" stroke="#8c8c8c" stroke-width="1"/><path d="M50 959.5 H54" stroke="#8c8c8c" stroke-width="1"/><path d="M40 969.5 H54" stroke="#8c8c8c" stroke-width="1"/><path d="M50 979.5 H54" stroke="#8c8c8c" stroke-width="1"/><path d="M50 988.5 H54" stroke="#8c8c8c" stroke-width="1"/><path d="M40 688.5 H54" stroke="#f0f0f0" stroke-width="1" stroke-dasharray="3 2"/></svg><div class="t" style="left:41px;top:886px;font-size:9.4px;font-weight:bold;color:#dcdcdc;transform-origin:0 0;transform:rotate(-90deg)">2</div><div class="t" style="left:41px;top:809px;font-size:9.4px;font-weight:bold;color:#dcdcdc;transform-origin:0 0;transform:rotate(-90deg)">3</div><div class="t" style="left:41px;top:733px;font-size:9.4px;font-weight:bold;color:#dcdcdc;transform-origin:0 0;transform:rotate(-90deg)">4</div><div class="t" style="left:41px;top:656px;font-size:9.4px;font-weight:bold;color:#dcdcdc;transform-origin:0 0;transform:rotate(-90deg)">5</div><div class="t" style="left:41px;top:579px;font-size:9.4px;font-weight:bold;color:#dcdcdc;transform-origin:0 0;transform:rotate(-90deg)">6</div><div class="t" style="left:41px;top:502px;font-size:9.4px;font-weight:bold;color:#dcdcdc;transform-origin:0 0;transform:rotate(-90deg)">7</div><div class="t" style="left:41px;top:425px;font-size:9.4px;font-weight:bold;color:#dcdcdc;transform-origin:0 0;transform:rotate(-90deg)">8</div><div class="t" style="left:41px;top:349px;font-size:9.4px;font-weight:bold;color:#dcdcdc;transform-origin:0 0;transform:rotate(-90deg)">9</div><div class="t" style="left:41px;top:272px;font-size:9.4px;font-weight:bold;color:#dcdcdc;transform-origin:0 0;transform:rotate(-90deg)">10</div><div class="t" style="left:41px;top:988px;font-size:9.5px;font-weight:bold;color:#d0d0d0;transform-origin:0 0;transform:rotate(-90deg)">Zoll</div>
<svg id="art" viewBox="54 226 1500 749" width="1500" height="749" style="position:absolute;left:54px;top:226px">
<rect x="54" y="226" width="1500" height="749" fill="#F9B404"/>
<!-- big circle -->
<circle cx="800" cy="560" r="184" fill="#F79404"/>
<!-- top centre darker band -->
<rect x="834" y="226" width="122" height="382" fill="#EE9504"/>
<path d="M834 379 H956 V608 H834Z" fill="#EB8A00"/>
<!-- red rect top-left -->
<rect x="54" y="272" width="708" height="190" fill="#F50004"/>
<!-- left vertical band -->
<rect x="80" y="226" width="122" height="749" fill="#EC9004"/>
<rect x="80" y="272" width="122" height="190" fill="#EC3802"/>
<!-- yellow bottom-left -->
<rect x="54" y="756" width="26" height="219" fill="#FFFF00"/>
<rect x="80" y="756" width="53" height="219" fill="#EBB800"/>
<!-- brown bar left -->
<rect x="54" y="791" width="305" height="16" fill="#662B00"/>
<rect x="80" y="791" width="122" height="16" fill="#964800"/>
<!-- white rect -->
<rect x="566" y="637" width="200" height="147" fill="#FFFFFF"/>
<!-- brown bars -->
<rect x="1037.3" y="226" width="15.8" height="116.7" fill="#6B2D00"/>
<rect x="1540" y="226" width="14" height="338" fill="#6B2D00"/>
<!-- light yellow -->
<rect x="1061" y="226" width="441" height="151" fill="#FBCB07"/>
<!-- red big bottom right -->
<rect x="1164" y="792" width="390" height="183" fill="#F50004"/>
<rect x="1458" y="519" width="96" height="393" fill="#FBCB07"/>
<rect x="1540" y="519" width="14" height="45" fill="#6B2D00"/>
<!-- red vertical bar -->
<rect x="1009" y="604" width="59" height="371" fill="#F50004"/>
<!-- antenna -->
<rect x="920" y="250" width="5" height="95" fill="#0a0a0a"/>

<g stroke-linejoin="round">
<!-- ============ HEAD BACK PARTS ============ -->
<!-- right red stepped piece -->
<path d="M976 388 L991 386 L1050 413 L1050 468 L1022 470 L1022 439 L976 414Z" fill="#7A0000"/>
<path d="M991 386 L999 386 L999 390 L1008 390 L1008 394 L1017 394 L1017 398 L1026 398 L1026 402 L1035 402 L1035 407 L1050 413 L1050 468 L1036 470 L1036 411 L976 388Z" fill="#6A4A2A"/>
<path d="M976 388 L1036 411 L1036 470 L1022 470 L1022 439 L976 414Z" fill="#7A0000"/>
<path d="M1022 439 L1036 445 L1036 470 L1022 470Z" fill="#A01000"/>
<path d="M976 388 L991 386 L1036 407 L1036 412Z" fill="#1a0505"/>
<path d="M1036 440 L1050 442 L1049 467 L1036 470Z" fill="#5A4A10"/>
<!-- right orange-red box -->
<path d="M1050 425 L1055 425 L1054 537 L1022 537 L1022 473 L1050 467Z" fill="#C23A00" stroke="#1a0a00" stroke-width="0.8"/>
<path d="M1050 425 L1055 425 L1055 465 L1050 468Z" fill="#EE6A05"/>
<!-- top knob -->
<path d="M813 309 L813 303 L847 280 L864 286 L864 306Z" fill="#15464E"/>
<path d="M829 306 A14 14 0 0 1 857 304" fill="none" stroke="#C5D5D5" stroke-width="1.6"/>
<path d="M832 306 A11 11 0 0 1 855 305 L855 308 L832 308Z" fill="#0f3a42"/>
<!-- dark green top plane right -->
<path d="M860 306 L935 341 L962 337 L962 360 L870 378 L860 368Z" fill="#2F5D50"/>
<path d="M861 328 L895 348 L871 356 L861 367Z" fill="#1E4540"/>
<path d="M861 328 L866 330 L866 362 L861 367Z" fill="#16302e"/>
<path d="M904 333 L921 343 L921 347 L904 348Z" fill="#3F4A40"/>
<!-- left ear -->
<path d="M673 304 L678 305 L678 326 L675.5 327Z" fill="#0D2A2E"/>
<path d="M587 319 L673 304 L675.5 326 L617 380 L585.5 359Z" fill="#6FA3A0"/>
<path d="M587 319 L589 320 L588 358 L617 378 L617 381 L585 360Z" fill="#C5DCD8"/>
<path d="M585.5 358 L618 380 L606 391 L605 423 L586 423Z" fill="#0E2D33"/>
<path d="M617 380 L675.5 327 L674.5 423 L607 423 L607 391Z" fill="#0F3B3C"/>
<path d="M617 379 L675 326 L676 329 L608 392 L607 423 L604.5 423 L605 390Z" fill="#8FC0BB"/>
<!-- head top teal band -->
<path d="M675.5 326 L850 307 L860 306 L860 400 L674.5 412Z" fill="#3A9FA9"/>
<path d="M724 321 L725 321 L725 400 L724 400Z" fill="#1a6a74"/>
<path d="M811 311 L812.5 311 L812.5 395 L811 395Z" fill="#1a6a74"/>
<path d="M812 311 L860 306 L860 395 L812 395Z" fill="#3193A3"/>
<!-- bottom gray-blue strip under teal -->
<path d="M674.5 400 L700 398 L703 404 L850 394 L850 402 L674.5 414Z" fill="#4A6A74"/>
<!-- diamond -->
<path d="M731 327 L745 339 L700 393 L688 380Z" fill="#4A5A5E"/>
<!-- gray box -->
<path d="M807 340 L834 354 L834.5 388.5 L808.5 394.5Z" fill="#050505"/>
<path d="M791.5 335.5 L807 340 L808.5 394.5 L793.5 395.5Z" fill="#55595C"/>
<path d="M700 347 L791.5 335.5 L793 396 L703 403.5Z" fill="#C9C9C9"/>
<path d="M705.5 355 L774.5 341 L779.5 382.5 L715 402Z" fill="#7EC4A6"/>
<path d="M705.5 355 L760 343 L715 356Z" fill="#a8d8c4" opacity=".5"/>
<ellipse cx="758" cy="374.5" rx="12" ry="8" fill="#5D8F80" transform="rotate(20 758 374.5)"/>
<ellipse cx="748" cy="372" rx="12" ry="11.5" fill="#0a0a0a"/>
<path d="M735 360 L752 361 L760 372 L756 383 L741 381Z" fill="#0a0a0a"/>
<ellipse cx="739.7" cy="368.5" rx="11.8" ry="12" fill="#EE0010"/>
<path d="M716 402 L788 389.5 L779 383Z" fill="#0a0a0a"/>
<circle cx="788" cy="389.5" r="1.8" fill="#0a0a0a"/>
<circle cx="721.4" cy="394.2" r="3.2" fill="#F29A0A" stroke="#E8E0D0" stroke-width="1"/>
<circle cx="787.5" cy="376.7" r="3" fill="#C89A20" stroke="#8a6a10" stroke-width="0.8"/>
<!-- white square + peach square + inner -->
<path d="M848 455 L907 445 L907 495 L848 490Z" fill="#050505"/>
<path d="M870.5 356 L962 336.5 L963.7 451.5 L873.6 468Z" fill="#E8E0D8" stroke="#120800" stroke-width="1.1"/>
<path d="M959 341 Q961 375 956.5 400" fill="none" stroke="#2a2a2a" stroke-width="0.8"/>
<path d="M844.5 372 L932.5 352 L937.5 434.5 L848 459.5Z" fill="#FAC98A" stroke="#120800" stroke-width="1.1"/>
<path d="M920 388 L933 390 L927.5 427 L922 424Z" fill="#8B6A4F"/>
<path d="M868 388.5 L922 371 L923.5 378 L892 384 L872 389Z" fill="#5A1E08"/>
<path d="M868 388.5 L918.5 382 L923 422.5 L866.5 432 L866 400Z" fill="#F0CDB4" stroke="#3a1a0a" stroke-width="0.8"/>
<path d="M866.5 408 L895 425 L866.5 432Z" fill="#C8A894"/>
<path d="M869 433 L925 423 L927 427 L871 437Z" fill="#8B6A4F"/>
<circle cx="894.8" cy="408.5" r="13" fill="#F2CFB8" stroke="#4A2010" stroke-width="2"/>
<!-- ============ right orange box ============ -->
<path d="M907 461 L944 457 L942 522 L907 495Z" fill="#2F5D50"/>
<path d="M920 459 L925 458.5 L925 508 L920 505Z" fill="#0a0a0a"/>
<path d="M964.7 410.6 L1021.3 439 L1021.3 560 L942 522.6 L945 457.4 L963.7 451.5Z" fill="#EC9A06" stroke="#1a0a00" stroke-width="0.8"/>
<path d="M942 522.6 L1021.3 559.5 L1021.3 564.5 L927.6 570.5 L929.6 530.8Z" fill="#7A4A00" stroke="#1a0a00" stroke-width="0.8"/>
<!-- ============ eye box ============ -->
<defs><clipPath id="eyeclip"><path d="M650.2 412.6 L846.2 394.2 L847.4 485.5 L650.2 498.7Z"/></clipPath></defs>
<path d="M649.6 412 L846.7 393.6 L848 486 L649.6 499.3Z" fill="#F29A0A" stroke="#1a0a00" stroke-width="1"/>
<g fill="none" stroke="#FFF200" stroke-width="2.8" stroke-linecap="round" stroke-linejoin="round" clip-path="url(#eyeclip)">
<path d="M650.4 418.5 Q657.0 413.3 663.0 412.6 Q668.9 411.9 675.6 411.1 L682.2 410.4"/>
<path d="M651.9 430.4 Q657.0 423.0 660.7 420.4 Q664.4 417.8 670.4 415.9 L676.3 414.1"/>
<path d="M651.1 442.2 Q654.8 436.3 657.8 434.1 L660.7 431.9"/>
<path d="M651.4 451.1 Q653.3 460.0 655.6 464.4 Q657.8 468.9 658.5 472.6 L659.3 476.3"/>
<path d="M651.9 482.2 Q660.0 483.7 663.0 486.7 Q665.9 489.6 667.4 491.9 L668.9 494.1"/>
<path d="M660.7 474.8 Q664.4 492.6 673.3 489.3 Q682.2 485.9 683.7 491.5 Q685.2 497.0 691.1 493.0 Q697.0 488.9 700.4 492.6 L703.7 496.3"/>
<path d="M654.1 494.1 Q668.9 483.7 674.1 488.9 L679.3 494.1"/>
<path d="M703.0 489.6 Q708.9 483.7 711.9 488.1 Q714.8 492.6 719.3 489.6 L723.7 486.7"/>
<path d="M711.9 408.1 Q723.7 409.6 728.1 411.5 Q732.6 413.3 729.6 418.9 L726.7 424.4"/>
<path d="M728.1 405.9 Q743.0 418.5 750.7 424.1 L758.5 429.6"/>
<path d="M758.5 402.2 Q745.9 414.1 739.6 419.6 L733.3 425.2"/>
<path d="M738.5 408.1 Q753.3 409.6 760.7 407.4 Q768.1 405.2 775.6 404.4 L783.0 403.7"/>
<path d="M747.4 428.9 Q750.4 439.3 745.9 440.7 Q741.5 442.2 738.5 438.5 Q735.6 434.8 738.5 431.9 Q741.5 428.9 745.2 430.4 Q748.9 431.9 748.1 434.8 L747.4 437.8"/>
<path d="M736.3 451.1 Q745.9 445.2 750.4 443.7 L754.8 442.2"/>
<path d="M737.8 462.2 Q748.9 468.9 754.1 471.9 Q759.3 474.8 764.4 478.5 L769.6 482.2"/>
<path d="M740.7 494.1 Q745.9 480.0 749.6 487.0 Q753.3 494.1 757.0 484.4 Q760.7 474.8 768.1 479.6 Q775.6 484.4 783.0 483.3 L790.4 482.2"/>
<path d="M723.7 474.8 Q735.6 480.7 739.3 478.5 L743.0 476.3"/>
<path d="M787.4 404.4 Q812.6 399.6 829.3 397.8 L845.9 396.0"/>
<path d="M818.5 402.2 Q833.3 405.2 839.6 405.6 L845.9 405.9"/>
<path d="M833.3 418.5 Q842.2 428.9 844.1 435.6 Q845.9 442.2 844.1 445.9 L842.2 449.6"/>
<path d="M837.8 463.7 Q842.2 459.3 844.4 458.1 L846.7 457.0"/>
<path d="M829.6 476.3 Q839.3 471.1 843.1 470.0 L847.0 468.9"/>
<path d="M811.1 481.5 Q827.4 479.3 837.4 480.7 L847.4 482.2"/>
<path d="M779.3 484.4 Q805.2 476.3 816.3 480.4 Q827.4 484.4 837.0 481.5 L846.7 478.5"/>
<path d="M794.8 489.6 Q812.6 483.7 818.5 485.9 L824.4 488.1"/>
<path d="M753.3 467.4 Q762.2 463.0 760.0 460.0 L757.8 457.0"/>
<path d="M836.3 397.8 Q830.4 409.6 834.8 411.9 L839.3 414.1"/>
</g>
<!-- eye shadows -->
<ellipse cx="708" cy="458" rx="38" ry="34" fill="#8A6A00" opacity=".85"/>
<ellipse cx="808" cy="450" rx="38" ry="34" fill="#8A6A00" opacity=".85"/>
<!-- left eye -->
<ellipse cx="697.3" cy="449.2" rx="39.6" ry="36" fill="#050505"/>
<ellipse cx="694" cy="449" rx="35" ry="32.5" fill="#5A2A10"/>
<ellipse cx="689.6" cy="448.4" rx="32" ry="31" fill="#E0100C"/>
<ellipse cx="687.4" cy="449" rx="27.4" ry="25.5" fill="#050505"/>
<ellipse cx="690" cy="449.6" rx="20.4" ry="20.7" fill="#4A2A0A"/>
<path d="M683 469 Q684 446 709 438 Q711 458 695 468 Q688 471 683 469Z" fill="#E8E0B0"/>
<!-- right eye -->
<ellipse cx="797.3" cy="441.8" rx="40.4" ry="36.7" fill="#050505"/>
<ellipse cx="794" cy="441.5" rx="36" ry="33.5" fill="#5A2A10"/>
<ellipse cx="789.6" cy="440.7" rx="32" ry="32" fill="#E0100C"/>
<ellipse cx="787.7" cy="440.7" rx="27.8" ry="26.7" fill="#050505"/>
<ellipse cx="790.7" cy="441.5" rx="21" ry="21.5" fill="#4A2A0A"/>
<path d="M784 462 Q785 438 810 429 Q812 450 796 461 Q789 464 784 462Z" fill="#E8E0B0"/>
<!-- ============ lower face ============ -->
<path d="M672 500.7 L860.4 487.4 L861.7 569 L672.5 576.3Z" fill="#0E2D30"/>
<path d="M672.5 558 L709 572 L672.5 576.3Z" fill="#1A4A50"/>
<!-- under-box band -->
<path d="M677 501 L709 499 L709 510 L677 509Z" fill="#8A6A40"/>
<path d="M709 499 L730 497.5 L733 515 L712 516Z" fill="#8a8a8a"/>
<path d="M730 497.5 L751 496 L751 514 L736 515Z" fill="#5AA89A"/>
<path d="M751 496 L813 491.5 L813 512 L751 514Z" fill="#4A6568"/>
<path d="M813 491.5 L860.4 487.4 L860.4 497 L813 500Z" fill="#B07A10"/>
<path d="M813 500 L860.4 497 L860.4 510 L813 512Z" fill="#F29A0A"/>
<!-- face front -->
<path d="M677.4 509 L715 517 L861 517 L861 548 L676 555.6Z" fill="#F2B868"/>
<path d="M677.4 509 L760 552 L676 555.6Z" fill="#FAC882"/>
<path d="M677.4 509 L712 512 L715.2 517 L690 516Z" fill="#FAC882"/>
<path d="M715.2 516.3 L878 508 L861 517.5 L715.2 519Z" fill="#7A5A30"/>
<path d="M737 534 L778 532.6 L778 539.3 L737 540.4Z" fill="#EE0008"/>
<!-- right of face -->
<path d="M861 512 L903 513 L903 569 L861.7 569Z" fill="#4A5F60"/>
<path d="M861 512 L903 513 L861 530Z" fill="#2F4548"/>
<path d="M903 513 L941 522 L929.6 531 L927.6 570.5 L903 570Z" fill="#050505"/>
<path d="M860.4 487.4 L878 486 L942 499.6 L941 522 L903 513 L866 491Z" fill="#8A5A48"/>
<path d="M866 492 L903 513 L862 512Z" fill="#5A3A30"/>
<!-- ============ NECK ============ -->
<path d="M728 575 L755 586.7 L763 597 L768.3 623 L757 628 L760 647 L778 663 L790 673 L815 677 L857 662 L923 622 L882 613 L877 590 L877 569Z" fill="#050505"/>
<path d="M763 597 L768.3 623 L769 650 L790 672 L815 676 L830 640 L790 605Z" fill="#0A2A33"/>
<path d="M790 605 L880 640 L857 661 L830 640Z" fill="#071c22"/>
<defs><clipPath id="neckclip"><path d="M728 575 L755 586.7 L763 597 L768.3 623 L757 628 L760 647 L778 663 L790 673 L815 677 L857 662 L923 622 L882 613 L877 590 L877 569Z"/></clipPath></defs>
<g fill="none" stroke="#7FBFB0" stroke-width="2.3" stroke-linecap="round" stroke-linejoin="round" clip-path="url(#neckclip)">
<path d="M730.0 575.8 Q756.7 575.8 759.2 578.8 Q761.7 581.7 759.2 584.2 L756.7 586.7"/>
<path d="M766.7 573.3 Q780.0 580.8 777.9 577.1 L775.8 573.3"/>
<path d="M796.7 573.3 Q790.0 588.3 781.7 592.5 Q773.3 596.7 769.2 597.1 L765.0 597.5"/>
<path d="M788.3 590.0 Q773.3 610.0 771.2 611.7 L769.2 613.3"/>
<path d="M813.3 573.3 Q816.7 590.0 812.5 598.3 Q808.3 606.7 806.7 615.0 Q805.0 623.3 808.3 631.7 Q811.7 640.0 817.5 644.2 L823.3 648.3"/>
<path d="M826.7 572.5 Q830.0 606.7 830.8 613.3 L831.7 620.0"/>
<path d="M858.3 571.7 Q850.0 595.0 843.3 606.7 Q836.7 618.3 831.7 629.2 Q826.7 640.0 825.0 645.0 L823.3 650.0"/>
<path d="M873.3 570.0 Q861.7 590.0 850.8 605.0 L840.0 620.0"/>
<path d="M870.0 583.3 Q861.7 606.7 864.2 616.7 Q866.7 626.7 874.2 635.0 L881.7 643.3"/>
<path d="M806.7 623.3 Q831.7 618.3 842.5 612.5 Q853.3 606.7 860.0 600.8 L866.7 595.0"/>
<path d="M770.0 630.8 Q790.0 636.7 802.5 640.0 Q815.0 643.3 831.7 646.7 Q848.3 650.0 860.8 653.3 L873.3 656.7"/>
<path d="M771.7 636.7 Q798.3 633.3 810.8 630.0 L823.3 626.7"/>
<path d="M823.3 646.7 Q856.7 643.3 869.2 641.7 Q881.7 640.0 887.5 637.5 L893.3 635.0"/>
<path d="M778.3 663.3 Q781.7 648.3 784.2 657.5 Q786.7 666.7 796.7 661.7 Q806.7 656.7 815.0 651.7 Q823.3 646.7 831.7 640.0 L840.0 633.3"/>
<path d="M840.0 640.0 L845.0 665.0"/>
<path d="M856.7 646.7 Q873.3 646.7 880.0 644.2 L886.7 641.7"/>
<path d="M823.3 670.0 L840.0 656.7"/>
</g>
<!-- ============ BODY ============ -->
<!-- left sleeve gray-green -->
<path d="M615 827 L619 775 L640 800 L627 915 L613 919 L597 975.5 L567 975.5 Q585 930 610 840Z" fill="#8FA89A"/>
<path d="M612 835 L616 836 L580 955 L576 953Z" fill="#3A6A55"/>
<path d="M604.5 878 L619 886 M603 884 L618 893 M590 928 Q610 942 632 945 M588 934 Q608 948 632 952" stroke="#1a2a25" stroke-width="1.8" fill="none"/>
<!-- left red -->
<path d="M616.3 776 L622 770 L640 790 L638 820 L638.5 909 L625 915 L619 860Z" fill="#EE0008"/>
<path d="M616.7 779 L638 795 L637 896 L627.5 897 L627 808 L620 800 L616.7 804Z" fill="#8A0A0A"/>
<path d="M629 822 L636 822 L636 828 L629 828Z M626 841 L634 841 L634 847 L626 847Z" fill="#1a0505"/>
<path d="M613.3 918 L626 914.5 L632.6 949 L637 975.5 L595 974Z" fill="#EE0008"/>
<path d="M625.5 914.5 L644 894 L639 975.5 L636.5 975.5 L632 948Z" fill="#2A0A08"/>
<!-- olive shoulder -->
<path d="M743.7 682 L730 693 L720 718.5 L706 722 L700 795 L641 804 L619 775 L637 742 L664 718.5Z" fill="#5A3F00" stroke="#1a0a00" stroke-width="0.8"/>
<path d="M703 718 Q690 735 688 752 Q697 740 703 718Z" fill="#8A6A5A"/>
<!-- peach chest -->
<path d="M730.4 693 L743.7 682 L750 700 L784 728 L716 725 L720 718Z" fill="#F5C48A"/>
<!-- black square -->
<path d="M704.4 722 L779.3 735 L770.4 815 L730.4 812.6 L729 786.7 L695 786.7Z" fill="#050505"/>
<path d="M715 722 L780.7 726.7 L780 735 L714 727.4Z" fill="#F29A0A"/>
<!-- cyan square -->
<path d="M650.4 754 L685.2 755.3 L686.7 795 L651 801.5Z" fill="#4ABAD0"/>
<path d="M655 749.5 Q668 747 684 750 L685 756 L650.5 754.5Z" fill="#050505"/>
<path d="M642 759.5 L654 758 M642 766 L653 764.5" stroke="#BDF0FA" stroke-width="2" fill="none"/>
<path d="M685 760 L700 756" stroke="#E8E0D8" stroke-width="1.6" fill="none"/>
<!-- light peach patch -->
<path d="M638.5 797 L651 801 L686.7 795 L727.4 786 L726 888 L632.6 895.6Z" fill="#F5D5BF"/>
<path d="M638.5 797 L651 801 L686.7 795 L704 789 Q690 800 685 815 Q670 840 655 838 Q645 832 637 820Z" fill="#E8B878"/>
<path d="M703 795 Q697 815 690 835 Q688 855 690 880 M690 818 Q696 835 698 850" stroke="#A89888" stroke-width="1.6" fill="none"/>
<ellipse cx="711" cy="818" rx="1.6" ry="4" fill="#0a0a0a" transform="rotate(10 711 818)"/>
<ellipse cx="713" cy="847" rx="3.2" ry="1.8" fill="#0a0a0a" transform="rotate(30 713 847)"/>
<ellipse cx="713.5" cy="866" rx="2.2" ry="3.6" fill="#0a0a0a" transform="rotate(10 713.5 866)"/>
<!-- cyan lower -->
<path d="M643.7 895.6 L725.2 889 L720 975.5 L638.5 974Z" fill="#5FFFFF"/>
<path d="M668 892.6 L723 889 L693.3 907.4 Q680 905 668 916.3Z" fill="#2A7F8A"/>
<!-- yellow -->
<path d="M727.4 812 L766 815 L748 927 L726 924Z" fill="#F8C800"/>
<path d="M752 815 Q745 850 752 880 Q750 850 762 815Z" fill="#E0A000"/>
<path d="M726 924 L748 927 L742 975.5 L720.7 974Z" fill="#E86A08"/>
<!-- collar left -->
<path d="M756.7 628 L760 647 L778 663 L790 673 L815 678 L785 700 L772 740 L746.7 713 L743.3 677 L746.7 660Z" fill="#C0652A"/>
<path d="M746 693 L756 705 L752 712 L745 700Z M753 680 L770 660 L775 666 L758 690Z M762 708 L775 700 L770 725Z" fill="#2A0A08"/>
<path d="M772 740 L785 702 L793 712Z" fill="#2A0A08"/>
<!-- collar right, dark red plaid -->
<path d="M923.3 621.7 L930 678 L905 706.7 L902 718.5 L834 718.5 L836.7 715 L856.7 663Z" fill="#9A1A00"/>
<path d="M923 622 L930 678 L921 688 L914 630Z" fill="#C23A00"/>
<path d="M912 632 L917 690 M905 640 L908 700 M838 708 L900 706 M845 690 L915 686 M870 655 L872 718 M878 652 L881 718" stroke="#2A0505" stroke-width="2" fill="none"/>
<path d="M840 718 L905 692" stroke="#EE0008" stroke-width="1.6" fill="none"/>
<path d="M908 628 L914 690" stroke="#F29A0A" stroke-width="1.2" fill="none"/>
<!-- collar middle orange striped -->
<path d="M790 693 L816.7 678 L836.7 716 L822 730 L800 715Z" fill="#F29A0A"/>
<path d="M795 692 L801 689 L817 722 L811 724Z M805 686 L812 682 L830 716 L823 720Z" fill="#2A0A08"/>
<path d="M856.7 663 L836.7 715 L825 700 L816.7 678Z" fill="#F29A0A"/>
<!-- orange-red placket -->
<path d="M785.2 702 L826.7 729 L814.8 790 L773.3 797 L781 735Z" fill="#F06A3A"/>
<path d="M785 702 L800 715 L822 730 L826.7 729 L800 700Z" fill="#A01800"/>
<path d="M780 789 L818 786 L817 790 L790 793Z" fill="#2A0A08"/>
<ellipse cx="795" cy="746" rx="2.6" ry="4.6" fill="#BFD5E5" stroke="#1a1a1a" stroke-width="1.4" transform="rotate(12 795 746)"/>
<!-- orange lower placket -->
<path d="M773 797 L814.8 790 L800 820 L773 975.5 L743.7 975.5 L766 820Z" fill="#F29A0A"/>
<path d="M814.8 790 L820 790 L808.9 820 L779 975.5 L771.9 975.5 L800 820Z" fill="#1a0a05"/>
<path d="M757.8 864.4 L801.5 867.4 L800.7 875.6 L757 872Z" fill="#EE1010"/>
<path d="M754 882 L798 886 M753 892 L797 896 M751 901 L796 906 M745 966 L772 972" stroke="#2A0A08" stroke-width="3" fill="none"/>
<ellipse cx="779.3" cy="839.5" rx="2.4" ry="4.6" fill="#BFD5E5" stroke="#1a1a1a" stroke-width="1.4" transform="rotate(12 779.3 839.5)"/>
<ellipse cx="762" cy="943" rx="2.4" ry="4.6" fill="#BFD5E5" stroke="#1a1a1a" stroke-width="1.4" transform="rotate(12 762 943)"/>
<!-- offwhite / cyan strip / black bar -->
<path d="M832.6 729 L854.8 719 L902 723 L900 740 L832 733Z" fill="#BDF0FA"/>
<path d="M826.7 729 L832 729 L821 790 L816 790Z" fill="#F29A0A"/>
<path d="M823 727 L827 729 L816.5 790 L812.5 790Z" fill="#1a0a05"/>
<path d="M828 736 L854.8 739 L847.4 795.6 L820.7 789.6Z" fill="#E8DDD5"/>
<path d="M826 740 L830 740 L822 789 L819 789Z" fill="#BDF0FA"/>
<path d="M832 729.6 L900.7 737.8 L900 744 L832 735.5Z" fill="#0a0a0a"/>
<!-- orange w/ stripes -->
<path d="M854.8 739 L896.3 745.2 L896.3 758.5 L921.5 764.4 L914 803 L849 792.6Z" fill="#F29A0A"/>
<path d="M861 760 L868 761 L861 795 L854 794Z M872 762 L880 763 L872 797 L865 796Z M898 766 L905 767 L897 801 L890 800Z M908 768 L914 769 L907 803 L901 802Z" fill="#FAC882"/>
<path d="M879 764 L886 765 L879 797 L873 796Z" fill="#E8600A"/>
<!-- dark teal big -->
<path d="M816 790 L849 792.6 L914 803 L912.6 820 L902 891 L801.5 879 L808.9 820Z" fill="#07262A"/>
<path d="M828 794 L914 803 L912.6 820 L905 870Z" fill="#1A0A00"/>
<path d="M803 820 L812 820 L805 878 L801.5 879Z" fill="#1a6a7a"/>
<!-- plaid peach area -->
<path d="M797 879 L902 891 L894.8 975.5 L779 974Z" fill="#F5C070"/>
<path d="M843 888 L891.9 901.5 L894.8 975.5 L828 974Z" fill="url(#brg)"/>
<defs><linearGradient id="brg" x1="0" y1="0" x2="1" y2="0.3"><stop offset="0" stop-color="#C06A10"/><stop offset="1" stop-color="#3A1500"/></linearGradient>
<linearGradient id="brf" x1="0" y1="0" x2="1" y2="0"><stop offset="0" stop-color="#3A1A00"/><stop offset="1" stop-color="#8A4A10"/></linearGradient></defs>
<path d="M800 884 L895 899 M798 894 L893 909 M797 903 L890 918" stroke="#2A0A08" stroke-width="3" fill="none"/>
<path d="M845 888 L830 975.5" stroke="#1a0a00" stroke-width="1.4" stroke-dasharray="2 1.5" fill="none"/>
<!-- dark red upper right chest -->
<path d="M834 718.5 L902 718.5 L909.6 693 L926 680 L905 706Z" fill="#9A1A00"/>
<path d="M862 719 L902 723 L902 719Z" fill="#F29A0A"/>
<!-- mint patch -->
<path d="M926 680 L933 680 L997 723 L985 775 L942 769 L896 758.5 L900.7 724 L909.6 693Z" fill="#7FC4A5" stroke="#1a0a00" stroke-width="0.8"/>
<path d="M926 680 L933 680 L968 704 Q950 700 940 703 Q925 710 909 708 L909.6 693Z" fill="#3F8070"/>
<ellipse cx="944" cy="717" rx="5.5" ry="1.4" fill="#0a0a0a"/>
<!-- peach right body -->
<path d="M921.5 766 L985 775 L1004 754 L980 975.5 L894.8 975.5 L902 891 L912.6 820Z" fill="#FAC878"/>
<path d="M920 766 L943.7 770.4 L939.3 809 L915.6 806Z" fill="#FAC882" stroke="#2A0A08" stroke-width="1.4"/>
<path d="M918 792 L940 795" stroke="#2A0A08" stroke-width="2" fill="none"/>
<path d="M912.6 820 L921.5 820 L933 872 L945 909 L942 934 L926 903 L914 864Z" fill="url(#brf)"/>
<path d="M942 937 L960 927 L959 975.5 L927.4 975.5 L939 956Z" fill="#5F4025"/>
<!-- right sleeve -->
<path d="M997 723 L1013.3 740 L1037.8 780 L1048.9 817.8 L1064.4 877.8 L1071.1 884.4 L1073.3 975.5 L960 975.5 L964 890 L975 800 L985 775Z" fill="#E89A08" stroke="#1a0a00" stroke-width="0.8"/>
<path d="M997 723 L1013.3 740 L1037.8 780 L1048.9 817.8 L1062 872 L1045 850 L1036 815 L1027 793 L1019 775 L1007 757 L991 747Z" fill="#EE0008"/>
<path d="M991 751 L1007.4 763 L997 775 L985 776Z" fill="#FAC882"/>
<path d="M999 734 Q1015 742 1029 769 Q1040 800 1043 813 M994 739 Q1010 748 1022 772 Q1030 795 1031 806" stroke="#2A0A08" stroke-width="2.4" fill="none"/>
<path d="M1017.8 784.4 L1040 806.7 L1044.4 873.3 L1017.8 880 L1020 975.5 L1003 975.5 L1008 880 L1006 800Z" fill="#B06A10"/>
<path d="M1037.8 800 L1060 870 L1062 880 L1044.4 873.3 L1035.6 828.9Z" fill="#6A4A2A"/>
<path d="M1035.6 817.8 L1042.2 860 L1037.8 862.2Z" fill="#2A0A08"/>
<path d="M983 728 L993 726 L994 732 L984 734Z M974 736 L992 740 L991 744 L974 741Z" fill="#2A0A08"/>
<path d="M984 727 L992 725 Q978 755 975 806 Q974 860 968 897 Q965 912 955.6 916 Q962 905 962.5 895 Q966 850 967 806 Q969 755 984 727Z" fill="#2A0A08"/>
<path d="M979.5 804 L982 804 L985.6 975.5 L982.8 975.5Z" fill="#2A0A08"/>
<path d="M990 802.2 L1005.6 762.2 L1006.7 802.2 L995.6 882.2 L990 975.5 L986.5 975.5 L990 882Z" fill="#2A0A08"/>
<path d="M962 897 L968 897 L966 975.5 L959 975.5Z" fill="#2A0A08"/>
<path d="M1015.6 891.1 L1048.9 888.9 L1051.1 915.6 L1071.1 913.3 L1071.1 924.4 L1037.8 933.3Z" fill="#050505"/>
<path d="M1048.9 882.2 L1071.1 884.4 L1072.2 915.6 L1051.1 915.6Z" fill="#5F4025"/>
<path d="M986.7 884 L1062 880.7 L1062 885 L986.7 892Z" fill="#E8A030" stroke="#2A0A08" stroke-width="0.8"/>
<path d="M1022 936 L1037 934 L1029 975.5 L1020 975.5Z" fill="#8A6A30"/>
<path d="M1050 926 L1071 922 L1072.5 975.5 L1053 975.5Z" fill="#B06A10"/>
</g>

</svg>
<div class="a" style="left:62px;top:235px;width:374px;height:30px;background:#262626;border-radius:5px;box-shadow:0 0 0 1px #1a1a1a,0 2px 6px rgba(0,0,0,.45)"></div><div class="a" style="left:64px;top:238px;width:104px;height:24px;background:#3a3a3a;border-radius:3px"></div><svg class="i" style="left:63.0px;top:238.0px" width="24" height="24" viewBox="-12.0 -12.0 24 24" fill="none" stroke="#dcdcdc" stroke-width="1.15" stroke-linecap="round" stroke-linejoin="round"><path d="M-6.5 6.5 L-5.5 2.5 L2.5 -5.5 L5.5 -2.5 L-2.5 5.5Z M3.5 -6.5 L5 -8 L8 -5 L6.5 -3.5Z" fill="#e0e0e0" stroke="none"/></svg><div class="t" style="left:87.2px;top:243.73px;font-size:13.4px;color:#e6e6e6;letter-spacing:-0.082px;">Bearbeiten</div><div class="sep" style="left:176px;top:238px;height:24px"></div><svg class="i" style="left:185.0px;top:238.0px" width="24" height="24" viewBox="-12.0 -12.0 24 24" fill="none" stroke="#dcdcdc" stroke-width="1.15" stroke-linecap="round" stroke-linejoin="round"><rect x="-7.5" y="-7.5" width="14" height="14" stroke="#9a9a9a" stroke-width="1"/><ellipse cx="-0.5" cy="-2.5" rx="5.3" ry="3.5" fill="#dcdcdc" stroke="none"/><path d="M3 1 V8.5 L5 6.8 L6.3 9.5 L7.6 8.9 L6.3 6.2 L8.8 6Z" fill="#f2f2f2" stroke="#262626" stroke-width="0.6"/></svg><svg class="i" style="left:217.0px;top:238.0px" width="24" height="24" viewBox="-12.0 -12.0 24 24" fill="none" stroke="#dcdcdc" stroke-width="1.15" stroke-linecap="round" stroke-linejoin="round"><path d="M1 -5.5 H-6.5 V7.5 H6.5 V0" stroke="#e0e0e0" stroke-width="1.1"/><ellipse cx="0" cy="3" rx="4.3" ry="3" fill="#6a6a6a" stroke="none"/><path d="M-0.5 0 Q0 -6 6 -6.5 M3.8 -8.8 L6.8 -6.5 L4.3 -4" stroke-width="1.1"/></svg><svg class="i" style="left:248.0px;top:238.0px" width="24" height="24" viewBox="-12.0 -12.0 24 24" fill="none" stroke="#dcdcdc" stroke-width="1.15" stroke-linecap="round" stroke-linejoin="round"><rect x="-5" y="1" width="12" height="7.5" fill="#f2f2f2" stroke="none"/><path d="M-6.5 -3 V-5 A2.8 2.8 0 0 1 -1 -5 V1" stroke="#f2f2f2" stroke-width="1.4"/><circle cx="1" cy="4" r="1.2" fill="#262626" stroke="none"/><path d="M1 4 V6.5" stroke="#262626" stroke-width="1"/></svg><div class="sep" style="left:282px;top:238px;height:24px"></div><div class="a" style="left:290px;top:238px;width:143px;height:24px;background:#3a3a3a;border-radius:3px"></div><div class="t" style="left:296px;top:243.73px;font-size:13.4px;color:#e6e6e6;letter-spacing:-0.006px;">Inhalt einpassen</div><svg class="i" style="left:413.0px;top:238.5px" width="24" height="24" viewBox="-12.0 -12.0 24 24" fill="none" stroke="#dcdcdc" stroke-width="1.4" stroke-linecap="round" stroke-linejoin="round"><path d="M-3.3 -1.7 L0 1.7 L3.3 -1.7"/></svg>
<div class="a" style="left:1554px;top:226px;width:16px;height:764px;background:#262626;"></div><div class="a" style="left:54px;top:975px;width:1500px;height:15px;background:#262626;"></div><svg class="i" style="left:1550.0px;top:223.0px" width="24" height="24" viewBox="-12.0 -12.0 24 24" fill="none" stroke="#dcdcdc" stroke-width="1.4" stroke-linecap="round" stroke-linejoin="round"><path d="M-3.3 1.7 L0 -1.7 L3.3 1.7"/></svg><svg class="i" style="left:1550.0px;top:955.0px" width="24" height="24" viewBox="-12.0 -12.0 24 24" fill="none" stroke="#dcdcdc" stroke-width="1.4" stroke-linecap="round" stroke-linejoin="round"><path d="M-3.3 -1.7 L0 1.7 L3.3 -1.7"/></svg><div class="a" style="left:1559px;top:447px;width:6px;height:290px;background:#8c8c8c;border-radius:3px"></div><svg class="i" style="left:50.0px;top:971.0px" width="24" height="24" viewBox="-12.0 -12.0 24 24" fill="none" stroke="#dcdcdc" stroke-width="1.4" stroke-linecap="round" stroke-linejoin="round"><path d="M1.7 -3.3 L-1.7 0 L1.7 3.3"/></svg><svg class="i" style="left:1534.0px;top:971.0px" width="24" height="24" viewBox="-12.0 -12.0 24 24" fill="none" stroke="#dcdcdc" stroke-width="1.4" stroke-linecap="round" stroke-linejoin="round"><path d="M-1.7 -3.3 L1.7 0 L-1.7 3.3"/></svg><div class="a" style="left:487px;top:980px;width:613px;height:6px;background:#8c8c8c;border-radius:3px"></div><svg class="i" style="left:1549.0px;top:971.0px" width="24" height="24" viewBox="-12.0 -12.0 24 24" fill="none" stroke="#dcdcdc" stroke-width="1.15" stroke-linecap="round" stroke-linejoin="round"><circle cx="-1" cy="-1" r="4.6" stroke-width="1"/><path d="M2.5 2.5 L6 6" stroke-width="1.4"/><circle cx="-1" cy="-1" r="1.6" stroke-width="0.8"/><path d="M-1 -4 V-3 M-1 1 V2 M-4 -1 H-3 M1 -1 H2" stroke-width="0.8"/></svg>
<div class="a" style="left:38px;top:990px;width:1532px;height:25px;background:#262626;"></div><div class="a" style="left:38px;top:1014px;width:1532px;height:1px;background:#454545;"></div><svg class="i" style="left:38.0px;top:991.0px" width="24" height="24" viewBox="-12.0 -12.0 24 24" fill="none" stroke="#dcdcdc" stroke-width="1.15" stroke-linecap="round" stroke-linejoin="round"><circle cx="0" cy="0" r="5.8" stroke-width="1"/><path d="M-3 0 H3 M0 -3 V3" stroke-width="1.3"/></svg><svg class="i" style="left:61.0px;top:991.0px" width="24" height="24" viewBox="-12.0 -12.0 24 24" fill="none" stroke="#dcdcdc" stroke-width="1.15" stroke-linecap="round" stroke-linejoin="round"><path d="M-4 -4.5 V4.5" stroke-width="1.5"/><path d="M5 -4.5 V4.5 L-2 0Z" fill="#dcdcdc" stroke="none"/></svg><svg class="i" style="left:84.0px;top:991.0px" width="24" height="24" viewBox="-12.0 -12.0 24 24" fill="none" stroke="#dcdcdc" stroke-width="1.15" stroke-linecap="round" stroke-linejoin="round"><path d="M3.5 -4.5 V4.5 L-3.5 0Z" fill="#dcdcdc" stroke="none"/></svg><div class="t" style="left:111.9px;top:995.54px;font-size:13.6px;color:#dcdcdc;letter-spacing:0.627px;">2 von 3</div><svg class="i" style="left:166.0px;top:991.0px" width="24" height="24" viewBox="-12.0 -12.0 24 24" fill="none" stroke="#dcdcdc" stroke-width="1.15" stroke-linecap="round" stroke-linejoin="round"><path d="M-3.5 -4.5 V4.5 L3.5 0Z" fill="#dcdcdc" stroke="none"/></svg><svg class="i" style="left:189.0px;top:991.0px" width="24" height="24" viewBox="-12.0 -12.0 24 24" fill="none" stroke="#dcdcdc" stroke-width="1.15" stroke-linecap="round" stroke-linejoin="round"><path d="M4 -4.5 V4.5" stroke-width="1.5"/><path d="M-5 -4.5 V4.5 L2 0Z" fill="#dcdcdc" stroke="none"/></svg><svg class="i" style="left:212.0px;top:991.0px" width="24" height="24" viewBox="-12.0 -12.0 24 24" fill="none" stroke="#dcdcdc" stroke-width="1.15" stroke-linecap="round" stroke-linejoin="round"><circle cx="0" cy="0" r="5.8" stroke-width="1"/><path d="M-3 0 H3 M0 -3 V3" stroke-width="1.3"/></svg><div class="a" style="left:235px;top:991px;width:99.5px;height:22px;background:#3a3a3a;border-radius:5px"></div><div class="t" style="left:267.6px;top:995.22px;font-size:12.2px;color:#e2e2e2;letter-spacing:-0.726px;">Seite 1</div><div class="a" style="left:337px;top:991px;width:99.5px;height:22px;background:#1f4a7f;border-radius:5px"></div><div class="t" style="left:369.6px;top:995.22px;font-size:12.2px;color:#e2e2e2;letter-spacing:-0.726px;">Seite 2</div><div class="a" style="left:439px;top:991px;width:99.5px;height:22px;background:#3a3a3a;border-radius:5px"></div><div class="t" style="left:471.6px;top:995.22px;font-size:12.2px;color:#e2e2e2;letter-spacing:-0.726px;">Seite 3</div><div class="a" style="left:38px;top:1015px;width:1532px;height:25px;background:#262626;"></div><svg class="i" style="left:40.0px;top:1016.0px" width="24" height="24" viewBox="-12.0 -12.0 24 24" fill="none" stroke="#dcdcdc" stroke-width="1.15" stroke-linecap="round" stroke-linejoin="round"><path d="M-6 6 L-5.2 3 L0.5 -2.7 L2.7 -0.5 L-3 5.2Z" fill="#e8703a" stroke="#f2f2f2" stroke-width="0.8"/><path d="M-0.3 -3.5 L3.5 0.3" stroke="#f2f2f2" stroke-width="1.4"/><path d="M1.5 -2.8 L3.5 -5.2 Q5 -6.8 6.3 -5.6 Q7.2 -4 5.6 -2.8 L3.2 -0.8Z" fill="#dfe6ee" stroke="none"/></svg><div class="a" style="left:62px;top:1020px;width:16px;height:16px;background:#ffffff;border-radius:2.5px"></div><svg class="i" style="left:58.0px;top:1016.0px" width="24" height="24" viewBox="-12.0 -12.0 24 24" fill="none" stroke="#dcdcdc" stroke-width="1.15" stroke-linecap="round" stroke-linejoin="round"><path d="M-6.5 6.5 L6.5 -6.5" stroke="#d0304a" stroke-width="0.9"/></svg><div class="t" style="left:577px;top:1022.43px;font-size:12.6px;color:#d0d0d0;letter-spacing:-0.007px;font-style:italic;">Farben (oder Objekte) hierher ziehen, um diese Farben mit dem Dokument zu speichern</div><div class="a" style="left:1551px;top:1021px;width:12px;height:12px;background:#3e3e3e;border-radius:6px"></div><svg class="i" style="left:1545.0px;top:1015.5px" width="24" height="24" viewBox="-12.0 -12.0 24 24" fill="none" stroke="#1f1f1f" stroke-width="1.3" stroke-linecap="round" stroke-linejoin="round"><path d="M-2.6 -1.2 L0 1.4 L2.6 -1.2"/></svg>
<div class="a" style="left:1570px;top:182px;width:1px;height:859px;background:#454545;"></div><div class="a" style="left:1571px;top:182px;width:345px;height:859px;background:#262626;"></div><div class="t" style="left:1579.5px;top:190.54px;font-size:13.6px;color:#e8e8e8;letter-spacing:0.116px;font-weight:bold;">Objekte</div><svg class="i" style="left:1838.5px;top:184.0px" width="24" height="24" viewBox="-12.0 -12.0 24 24" fill="none" stroke="#dcdcdc" stroke-width="1.15" stroke-linecap="round" stroke-linejoin="round"><path d="M-3.5 -5 V5 L4.5 0Z" fill="#e4e4e4" stroke="none"/></svg><svg class="i" style="left:1863.0px;top:184.0px" width="24" height="24" viewBox="-12.0 -12.0 24 24" fill="none" stroke="#dcdcdc" stroke-width="1.15" stroke-linecap="round" stroke-linejoin="round"><path d="M-5 -5 L5 5 M5 -5 L-5 5" stroke-width="1.4"/></svg><div class="a" style="left:1574px;top:214px;width:285px;height:24px;background:#262626;box-shadow:inset 0 0 0 1px #4d4d4d;border-radius:2px"></div><div class="t" style="left:1580px;top:220.03px;font-size:12.8px;color:#a0a0a0;letter-spacing:-0.519px;">Suche</div><div class="a" style="left:1575px;top:242px;width:24px;height:24px;background:#1f4a7f;border-radius:4px"></div><svg class="i" style="left:1575.0px;top:242.0px" width="24" height="24" viewBox="-12.0 -12.0 24 24" fill="none" stroke="#dcdcdc" stroke-width="1.15" stroke-linecap="round" stroke-linejoin="round"><path d="M1 -7.5 H-4.5 Q-6 -7.5 -6 -6 V4.5 Q-6 6 -4.5 6 H-2.5 M1 -7.5 L5 -3.5 V0 M1 -7.5 V-3.5 H5" stroke="#e8f0fb" stroke-width="1.1"/><path d="M-1.5 3 L3 1 L7.5 3 L3 5Z" fill="#e8f0fb" stroke="none"/><path d="M-1.5 5.5 L3 7.5 L7.5 5.5" stroke="#e8f0fb" stroke-width="1.1"/></svg><svg class="i" style="left:1607.0px;top:242.0px" width="24" height="24" viewBox="-12.0 -12.0 24 24" fill="none" stroke="#dcdcdc" stroke-width="1.15" stroke-linecap="round" stroke-linejoin="round"><path d="M-7.5 -2 L0 -6 L7.5 -2 L0 2Z" stroke-width="1.2"/><path d="M-7.5 2.5 L0 6.5 L7.5 2.5 L4.5 1 L0 3.3 L-4.5 1Z" fill="#e4e4e4" stroke="none"/></svg><div class="t" style="left:1638.9px;top:248.13px;font-size:13.2px;color:#e8e8e8;letter-spacing:0.091px;font-weight:bold;">Seite 2</div><div class="t" style="left:1702.2px;top:248.13px;font-size:13.2px;color:#dcdcdc;letter-spacing:-0.318px;">Layer 1</div><svg class="i" style="left:1834.0px;top:242.0px" width="24" height="24" viewBox="-12.0 -12.0 24 24" fill="none" stroke="#dcdcdc" stroke-width="1.15" stroke-linecap="round" stroke-linejoin="round"><path d="M-1.3 -8.2 H1.3 L1.9 -5.9 L3.3 -5.3 L5.4 -6.5 L7.2 -4.7 L6 -2.6 L6.6 -1.2 L8.9 -0.6 V2 L6.6 2.6 L6 4 L7.2 6.1 L5.4 7.9 L3.3 6.7 L1.9 7.3 L1.3 9.6 H-1.3 L-1.9 7.3 L-3.3 6.7 L-5.4 7.9 L-7.2 6.1 L-6 4 L-6.6 2.6 L-8.9 2 V-0.6 L-6.6 -1.2 L-6 -2.6 L-7.2 -4.7 L-5.4 -6.5 L-3.3 -5.3 L-1.9 -5.9Z" fill="#e4e4e4" stroke="none" transform="translate(0 -0.7)"/><circle cx="0" cy="0" r="3" fill="#262626" stroke="none"/><path d="M4 0 H0 L4 -4Z" fill="#e0e0e0" stroke="none" transform="translate(7 10.5)"/></svg><div class="a" style="left:1571px;top:268px;width:276px;height:739.5px;overflow:hidden"><div class="a" style="left:-1571px;top:-268px;width:1920px;height:1080px"><svg class="i" style="left:1589.0px;top:258.0px" width="24" height="24" viewBox="-12.0 -12.0 24 24" fill="none" stroke="#dcdcdc" stroke-width="1.15" stroke-linecap="round" stroke-linejoin="round"><path d="M-4.5 -6 V6 L5.5 0Z" fill="#dcdcdc" stroke="none"/></svg><svg class="i" style="left:1614px;top:258px" width="24" height="24" viewBox="-12 -12 24 24"><rect x="-11" y="-2" width="13" height="12" fill="#4a5a58"/><rect x="2" y="-2" width="9" height="12" fill="#050505"/></svg><div class="t" style="left:1642.3px;top:264.03px;font-size:13px;color:#e0e0e0;letter-spacing:0.078px;">PowerClip-Kurve</div><svg class="i" style="left:1589.0px;top:290.0px" width="24" height="24" viewBox="-12.0 -12.0 24 24" fill="none" stroke="#dcdcdc" stroke-width="1.15" stroke-linecap="round" stroke-linejoin="round"><path d="M-4.5 -6 V6 L5.5 0Z" fill="#dcdcdc" stroke="none"/></svg><svg class="i" style="left:1614px;top:290px" width="24" height="24" viewBox="-12 -12 24 24"><path d="M-11 -3 L11 -5 V3.5 L-11 4.5Z" fill="#f5b860"/></svg><div class="t" style="left:1642.3px;top:296.03px;font-size:13px;color:#e0e0e0;letter-spacing:0.078px;">PowerClip-Kurve</div><svg class="i" style="left:1614px;top:322px" width="24" height="24" viewBox="-12 -12 24 24"><path d="M-11 0.5 L11 -1.5 V0.8 L-11 1.2Z" fill="#e6e6e6"/></svg><div class="t" style="left:1642.3px;top:328.03px;font-size:13px;color:#e0e0e0;letter-spacing:0.148px;">Kurve</div><svg class="i" style="left:1589.0px;top:354.0px" width="24" height="24" viewBox="-12.0 -12.0 24 24" fill="none" stroke="#dcdcdc" stroke-width="1.15" stroke-linecap="round" stroke-linejoin="round"><path d="M-4.5 -6 V6 L5.5 0Z" fill="#dcdcdc" stroke="none"/></svg><svg class="i" style="left:1614px;top:354px" width="24" height="24" viewBox="-12 -12 24 24"><path d="M-10 -6 H11 V4 L-10 5Z" fill="#0b2a2a"/><path d="M-10 2 L11 1 V4 L-10 5Z" fill="#050a0a"/></svg><div class="t" style="left:1642.3px;top:360.03px;font-size:13px;color:#e0e0e0;letter-spacing:0.078px;">PowerClip-Kurve</div><svg class="i" style="left:1589.0px;top:386.0px" width="24" height="24" viewBox="-12.0 -12.0 24 24" fill="none" stroke="#dcdcdc" stroke-width="1.15" stroke-linecap="round" stroke-linejoin="round"><path d="M-4.5 -6 V6 L5.5 0Z" fill="#dcdcdc" stroke="none"/></svg><svg class="i" style="left:1614px;top:386px" width="24" height="24" viewBox="-12 -12 24 24"><path d="M-11 -7 L9 -8 L11 5 L-6 7Z" fill="none" stroke="#7fc4b0" stroke-width="0.8"/><path d="M-8 -5 Q0 2 8 -6 M-5 5 Q2 -6 9 3 M-9 0 H8 M-2 -7 L1 6" fill="none" stroke="#7fc4b0" stroke-width="0.7"/></svg><div class="t" style="left:1642.3px;top:392.03px;font-size:13px;color:#e0e0e0;letter-spacing:0.078px;">PowerClip-Kurve</div><svg class="i" style="left:1614px;top:418px" width="24" height="24" viewBox="-12 -12 24 24"><path d="M0 -10 Q5 -9 4 0 Q3 9 -2 10 Q-6 9 -4 0 Q-3 -8 0 -10Z" fill="#dcd3c8"/></svg><div class="t" style="left:1642.3px;top:424.03px;font-size:13px;color:#e0e0e0;letter-spacing:0.148px;">Kurve</div><svg class="i" style="left:1614px;top:450px" width="24" height="24" viewBox="-12 -12 24 24"><path d="M-7 -10 L7 1 L-3 9 Q-5 0 -7 -10Z" fill="#020202"/></svg><div class="t" style="left:1642.3px;top:456.03px;font-size:13px;color:#e0e0e0;letter-spacing:0.148px;">Kurve</div><svg class="i" style="left:1614px;top:482px" width="24" height="24" viewBox="-12 -12 24 24"><path d="M-11 -4 L7 -8 L11 -5 L0 7 L-8 4Z" fill="#020202"/></svg><div class="t" style="left:1642.3px;top:488.03px;font-size:13px;color:#e0e0e0;letter-spacing:0.148px;">Kurve</div><svg class="i" style="left:1614px;top:514px" width="24" height="24" viewBox="-12 -12 24 24"><path d="M5 -10 V10 Q-5 2 -4 -6 Q-1 -10 5 -10Z" fill="#020202" stroke="#e6e6e6" stroke-width="0.7"/></svg><div class="t" style="left:1642.3px;top:520.03px;font-size:13px;color:#e0e0e0;letter-spacing:0.148px;">Kurve</div><svg class="i" style="left:1614px;top:546px" width="24" height="24" viewBox="-12 -12 24 24"><path d="M-10 2.5 L11 -1.5 V0.5 L-7 2.8Z" fill="#f59a10"/></svg><div class="t" style="left:1642.3px;top:552.03px;font-size:13px;color:#e0e0e0;letter-spacing:0.148px;">Kurve</div><svg class="i" style="left:1614px;top:578px" width="24" height="24" viewBox="-12 -12 24 24"><path d="M-9 -8 L11 -6 L1 -4 L-2 9 L-10 7Z" fill="#efe3d3"/></svg><div class="t" style="left:1642.3px;top:584.03px;font-size:13px;color:#e0e0e0;letter-spacing:0.148px;">Kurve</div><svg class="i" style="left:1614px;top:610px" width="24" height="24" viewBox="-12 -12 24 24"><path d="M-8 -8 L8 -10 V8 L-9 10Z" fill="#020202"/></svg><div class="t" style="left:1642.3px;top:616.03px;font-size:13px;color:#e0e0e0;letter-spacing:0.148px;">Kurve</div><svg class="i" style="left:1589.0px;top:642.0px" width="24" height="24" viewBox="-12.0 -12.0 24 24" fill="none" stroke="#dcdcdc" stroke-width="1.15" stroke-linecap="round" stroke-linejoin="round"><path d="M-4.5 -6 V6 L5.5 0Z" fill="#dcdcdc" stroke="none"/></svg><svg class="i" style="left:1614px;top:642px" width="24" height="24" viewBox="-12 -12 24 24"><path d="M-11 7 Q-10 -5 -4 -7 Q2 -9 8 -6 Q11 -2 11 7Z" fill="#f5c070"/><path d="M-8 7 V-2 L-3 -5 V7Z" fill="#111"/><path d="M-3 -5 H3 V7 H-3Z" fill="#f59a10"/><path d="M3 -6 L8 -3 V7 H3Z" fill="#0f3b3c"/><path d="M-11 7 L-9 0 L-8 7Z" fill="#e00"/><path d="M-6 2 H-3 V7 H-6Z" fill="#5ff"/><path d="M8 -3 L11 7 H9Z" fill="#e00"/></svg><div class="t" style="left:1642.3px;top:648.03px;font-size:13px;color:#e0e0e0;letter-spacing:0.078px;">PowerClip-Kurve</div><svg class="i" style="left:1614px;top:674px" width="24" height="24" viewBox="-12 -12 24 24"><rect x="-11" y="-7" width="22" height="14" fill="#ffffff"/></svg><div class="t" style="left:1642.3px;top:680.03px;font-size:13px;color:#e0e0e0;letter-spacing:-0.124px;">Rechteck</div><svg class="i" style="left:1614px;top:706px" width="24" height="24" viewBox="-12 -12 24 24"><rect x="-3" y="-11" width="6" height="22" fill="#ee0000"/></svg><div class="t" style="left:1642.3px;top:712.03px;font-size:13px;color:#e0e0e0;letter-spacing:-0.124px;">Rechteck</div><div class="a" style="left:1571px;top:734px;width:275px;height:32px;background:#1f4a7f;border-radius:0 3px 3px 0"></div><svg class="i" style="left:1589.0px;top:738.0px" width="24" height="24" viewBox="-12.0 -12.0 24 24" fill="none" stroke="#dcdcdc" stroke-width="1.15" stroke-linecap="round" stroke-linejoin="round"><path d="M-6 -4.5 H6 L0 5Z" fill="#e8e8e8" stroke="none"/></svg><svg class="i" style="left:1614px;top:738px" width="24" height="24" viewBox="-12 -12 24 24"><rect x="-11" y="-6" width="22" height="11.5" fill="#f9b404"/><rect x="-11" y="-5" width="9" height="4" fill="#f50004"/><rect x="-11" y="2" width="2" height="3.5" fill="#ffff00"/><rect x="3" y="-6" width="6" height="3" fill="#fbcb07"/><rect x="5" y="1" width="6" height="4.5" fill="#f50004"/><rect x="9" y="-2" width="2" height="4" fill="#fbcb07"/><circle cx="0" cy="0" r="3" fill="#f79404"/><rect x="-9" y="-6" width="2" height="11.5" fill="#ec9004" opacity=".8"/><rect x="3" y="-1" width="1.5" height="6.5" fill="#f50004"/></svg><div class="t" style="left:1642.3px;top:744.03px;font-size:13px;color:#eef3fb;letter-spacing:-0.009px;">PowerClip-Rechteck</div><svg class="i" style="left:1627px;top:770px" width="24" height="24" viewBox="-12 -12 24 24"><rect x="-1" y="-11" width="2" height="22" fill="#5a2a0a"/></svg><div class="t" style="left:1655.5px;top:776.03px;font-size:13px;color:#e0e0e0;letter-spacing:-0.124px;">Rechteck</div><svg class="i" style="left:1627px;top:802px" width="24" height="24" viewBox="-12 -12 24 24"><rect x="-1.5" y="-11" width="3" height="22" fill="#5a2a0a"/></svg><div class="t" style="left:1655.5px;top:808.03px;font-size:13px;color:#e0e0e0;letter-spacing:-0.124px;">Rechteck</div><svg class="i" style="left:1627px;top:834px" width="24" height="24" viewBox="-12 -12 24 24"><rect x="-11" y="-0.5" width="22" height="1.2" fill="#6a1e0a"/></svg><div class="t" style="left:1655.5px;top:840.03px;font-size:13px;color:#e0e0e0;letter-spacing:-0.124px;">Rechteck</div><svg class="i" style="left:1627px;top:866px" width="24" height="24" viewBox="-12 -12 24 24"><rect x="-0.5" y="-11" width="1.1" height="22" fill="#6a1e0a"/></svg><div class="t" style="left:1655.5px;top:872.03px;font-size:13px;color:#e0e0e0;letter-spacing:-0.124px;">Rechteck</div><svg class="i" style="left:1627px;top:898px" width="24" height="24" viewBox="-12 -12 24 24"><rect x="-0.5" y="-11" width="1.1" height="22" fill="#6a1e0a"/></svg><div class="t" style="left:1655.5px;top:904.03px;font-size:13px;color:#e0e0e0;letter-spacing:-0.124px;">Rechteck</div><svg class="i" style="left:1627px;top:930px" width="24" height="24" viewBox="-12 -12 24 24"><circle cx="0" cy="0" r="11" fill="#f78c0a"/></svg><div class="t" style="left:1655.5px;top:936.03px;font-size:13px;color:#e0e0e0;letter-spacing:-0.314px;">Ellipse</div><svg class="i" style="left:1627px;top:962px" width="24" height="24" viewBox="-12 -12 24 24"><rect x="-9" y="-11" width="18" height="22" fill="#ffff00"/></svg><div class="t" style="left:1655.5px;top:968.03px;font-size:13px;color:#e0e0e0;letter-spacing:-0.124px;">Rechteck</div><svg class="i" style="left:1627px;top:994px" width="24" height="24" viewBox="-12 -12 24 24"><rect x="-11" y="-11" width="22" height="22" fill="#ffff00"/></svg><div class="t" style="left:1655.5px;top:1000.03px;font-size:13px;color:#e0e0e0;letter-spacing:-0.124px;">Rechteck</div></div></div><svg class="i" style="left:1841.0px;top:266.0px" width="24" height="24" viewBox="-12.0 -12.0 24 24" fill="none" stroke="#dcdcdc" stroke-width="1.3" stroke-linecap="round" stroke-linejoin="round"><path d="M-3 1.5 L0 -1.5 L3 1.5"/></svg><svg class="i" style="left:1841.0px;top:988.0px" width="24" height="24" viewBox="-12.0 -12.0 24 24" fill="none" stroke="#dcdcdc" stroke-width="1.3" stroke-linecap="round" stroke-linejoin="round"><path d="M-3 -1.5 L0 1.5 L3 -1.5"/></svg><div class="a" style="left:1851px;top:841px;width:6px;height:101px;background:#8c8c8c;border-radius:3px"></div><svg class="i" style="left:1575.0px;top:1012.0px" width="24" height="24" viewBox="-12.0 -12.0 24 24" fill="none" stroke="#dcdcdc" stroke-width="1.15" stroke-linecap="round" stroke-linejoin="round"><path d="M-7 2 L-1 -1 L6 2 L-1 5Z" fill="#e4e4e4" stroke="none"/><path d="M-7 -1 L-1.5 -4" stroke-width="1.1"/><rect x="1.5" y="-8.5" width="7" height="7" fill="#2db560" stroke="none"/><path d="M5 -7.3 V-2.7 M2.7 -5 H7.3" stroke="#e9ffe9" stroke-width="1.1"/></svg><svg class="i" style="left:1607.0px;top:1012.0px" width="24" height="24" viewBox="-12.0 -12.0 24 24" fill="none" stroke="#dcdcdc" stroke-width="1.15" stroke-linecap="round" stroke-linejoin="round"><path d="M-7 -1 L-1 -4 M-7 -1 L-1 2 L6 -1 M-7 2 L-1 5 L6 2 M-7 5 L-1 8 L6 5" stroke-width="1.1"/><rect x="1.5" y="-8.5" width="7" height="7" fill="#2db560" stroke="none"/><path d="M5 -7.3 V-2.7 M2.7 -5 H7.3" stroke="#e9ffe9" stroke-width="1.1"/><path d="M4 0 H0 L4 -4Z" fill="#e0e0e0" stroke="none" transform="translate(7 10.5)"/></svg><div class="t" style="left:1643px;top:1016px;font-size:15px;font-style:italic;font-family:'Liberation Serif',serif;color:#5c5c5c">fx</div><div class="a" style="left:1653px;top:1014px;width:6px;height:6px;background:#4a4a4a;"></div><svg class="i" style="left:1671.0px;top:1012.0px" width="24" height="24" viewBox="-12.0 -12.0 24 24" fill="none" stroke="#dcdcdc" stroke-width="1.15" stroke-linecap="round" stroke-linejoin="round"><path d="M-5 -4 H5 L4 7.5 H-4Z" fill="#e4e4e4" stroke="none"/><path d="M-6.5 -5.5 H6.5 M-2 -7.5 H2" stroke-width="1.5"/><path d="M-1.5 -1.5 V5 M1.5 -1.5 V5" stroke="#262626" stroke-width="1"/></svg><div class="a" style="left:1737px;top:1022px;width:114px;height:4px;background:#555555;border-radius:2px"></div><div class="a" style="left:1737px;top:1022px;width:55px;height:4px;background:#2f7fd0;border-radius:2px"></div><div class="a" style="left:1787px;top:1019px;width:11px;height:11px;background:#1f3550;border-radius:6px;box-shadow:0 0 0 1px #7a8aa0"></div><div class="a" style="left:1792px;top:1029px;width:1.5px;height:1.5px;background:#e0e0e0;"></div>
<div class="a" style="left:1862px;top:212px;width:1px;height:829px;background:#3a3a3a;"></div><div class="a" style="left:1863px;top:214.4px;width:24px;height:92.99999999999997px;background:#3a3a3a;border-radius:0 6px 6px 0"></div><svg class="i" style="left:1863.0px;top:215.4px" width="24" height="24" viewBox="-12.0 -12.0 24 24" fill="none" stroke="#dcdcdc" stroke-width="1.15" stroke-linecap="round" stroke-linejoin="round"><path d="M-7.5 -2 L0 -5.5 L7.5 -2 L0 1.5Z" fill="#e4e4e4" stroke="none"/><path d="M-4 0.5 V3.5 Q0 6 4 3.5 V0.5 L0 2.5Z" fill="#e4e4e4" stroke="none"/><path d="M7 -2 V3" stroke-width="1"/></svg><div class="t" style="left:1881.2px;top:243.7px;font-size:13px;letter-spacing:0.170px;color:#dcdcdc;transform-origin:0 0;transform:rotate(90deg)">Lernen</div><div class="a" style="left:1863px;top:315px;width:24px;height:136.2px;background:#3a3a3a;border-radius:0 6px 6px 0"></div><svg class="i" style="left:1863.0px;top:316.0px" width="24" height="24" viewBox="-12.0 -12.0 24 24" fill="none" stroke="#dcdcdc" stroke-width="1.15" stroke-linecap="round" stroke-linejoin="round"><path d="M-3.5 -6 L3 -0.5 L-2 4.5 L-7 0Z" stroke-width="1.1"/><path d="M-5 -7 L-1.5 -3.5" stroke-width="1.1"/><path d="M2 3 H8 M2 5.5 H8 M4 8 H8" stroke-width="1"/></svg><div class="t" style="left:1881.2px;top:343.6px;font-size:13px;letter-spacing:0.116px;color:#dcdcdc;transform-origin:0 0;transform:rotate(90deg)">Eigenschaften</div><div class="a" style="left:1863px;top:457px;width:24px;height:102.39999999999998px;background:#1f4a7f;border-radius:0 6px 6px 0"></div><svg class="i" style="left:1863.0px;top:458.0px" width="24" height="24" viewBox="-12.0 -12.0 24 24" fill="none" stroke="#dcdcdc" stroke-width="1.15" stroke-linecap="round" stroke-linejoin="round"><path d="M-7 -2.5 L0 -6 L7 -2.5 L0 1Z" stroke="#e8f0fb" stroke-width="1.2"/><path d="M-7 1.5 L0 5 L7 1.5 L4.5 0.3 L0 2.5 L-4.5 0.3Z" fill="#e8f0fb" stroke="none"/></svg><div class="t" style="left:1881.2px;top:486.5px;font-size:13px;letter-spacing:0.285px;color:#e8f0fb;transform-origin:0 0;transform:rotate(90deg)">Objekte</div><div class="a" style="left:1863px;top:564.5px;width:24px;height:134.20000000000005px;background:#3a3a3a;border-radius:0 6px 6px 0"></div><svg class="i" style="left:1863.0px;top:565.5px" width="24" height="24" viewBox="-12.0 -12.0 24 24" fill="none" stroke="#dcdcdc" stroke-width="1.15" stroke-linecap="round" stroke-linejoin="round"><path d="M0 -5.5 Q0.6 -0.6 5.5 0 Q0.6 0.6 0 5.5 Q-0.6 0.6 -5.5 0 Q-0.6 -0.6 0 -5.5Z" fill="#e8e8e8" stroke="none" transform="translate(-1 1)"/><circle cx="5" cy="-5" r="1.2" fill="#e8e8e8" stroke="none"/></svg><div class="t" style="left:1881.2px;top:594.1px;font-size:13px;letter-spacing:0.042px;color:#dcdcdc;transform-origin:0 0;transform:rotate(90deg)">KI-Erzeugung</div><div class="a" style="left:1870px;top:718px;width:2.2px;height:2.2px;background:#dcdcdc;border-radius:2px;box-shadow:4px 0 0 #dcdcdc,8px 0 0 #dcdcdc"></div>
<div class="a" style="left:1891px;top:182px;width:1px;height:859px;background:#3a3a3a;"></div><svg class="i" style="left:1892.0px;top:183.0px" width="24" height="24" viewBox="-12.0 -12.0 24 24" fill="none" stroke="#dcdcdc" stroke-width="1.15" stroke-linecap="round" stroke-linejoin="round"><path d="M-6 6 L-5.2 3 L0.5 -2.7 L2.7 -0.5 L-3 5.2Z M-0.3 -3.5 L3.5 0.3 M1.5 -2.8 L3.5 -5.2 Q5 -6.8 6.3 -5.6 Q7.2 -4 5.6 -2.8 L3.2 -0.8Z" fill="#4a4a4a" stroke="#4a4a4a" stroke-width="0.8"/></svg><div class="a" style="left:1896px;top:206px;width:16px;height:16px;background:#ffffff;border-radius:2.5px"></div><svg class="i" style="left:1892.0px;top:202.0px" width="24" height="24" viewBox="-12.0 -12.0 24 24" fill="none" stroke="#dcdcdc" stroke-width="1.15" stroke-linecap="round" stroke-linejoin="round"><path d="M-6.5 6.5 L6.5 -6.5" stroke="#d0304a" stroke-width="0.9"/></svg><div class="a" style="left:1896px;top:225px;width:16px;height:16px;background:#0d0508;"></div><div class="a" style="left:1896px;top:241px;width:16px;height:16px;background:#333333;"></div><div class="a" style="left:1896px;top:257px;width:16px;height:16px;background:#4d4d4d;"></div><div class="a" style="left:1896px;top:273px;width:16px;height:16px;background:#666666;"></div><div class="a" style="left:1896px;top:289px;width:16px;height:16px;background:#808080;"></div><div class="a" style="left:1896px;top:305px;width:16px;height:16px;background:#999999;"></div><div class="a" style="left:1896px;top:321px;width:16px;height:16px;background:#b3b3b3;"></div><div class="a" style="left:1896px;top:337px;width:16px;height:16px;background:#cccccc;"></div><div class="a" style="left:1896px;top:353px;width:16px;height:16px;background:#e0e0e0;"></div><div class="a" style="left:1896px;top:369px;width:16px;height:16px;background:#f0f0f0;"></div><div class="a" style="left:1896px;top:385px;width:16px;height:16px;background:#ffffff;"></div><div class="a" style="left:1896px;top:401px;width:16px;height:16px;background:#2a2a9a;"></div><div class="a" style="left:1896px;top:417px;width:16px;height:16px;background:#3fa9f5;"></div><div class="a" style="left:1896px;top:433px;width:16px;height:16px;background:#2aa850;"></div><div class="a" style="left:1896px;top:449px;width:16px;height:16px;background:#ffee00;"></div><div class="a" style="left:1896px;top:465px;width:16px;height:16px;background:#f00014;"></div><div class="a" style="left:1896px;top:481px;width:16px;height:16px;background:#e6007e;"></div><div class="a" style="left:1896px;top:497px;width:16px;height:16px;background:#a0328c;"></div><div class="a" style="left:1896px;top:513px;width:16px;height:16px;background:#ff8c14;"></div><div class="a" style="left:1896px;top:529px;width:16px;height:16px;background:#f5a0aa;"></div><div class="a" style="left:1896px;top:545px;width:16px;height:16px;background:#8c7873;"></div><div class="a" style="left:1896px;top:561px;width:16px;height:16px;background:#c8bee6;"></div><div class="a" style="left:1896px;top:577px;width:16px;height:16px;background:#a08cc8;"></div><div class="a" style="left:1896px;top:593px;width:16px;height:16px;background:#6482c8;"></div><div class="a" style="left:1896px;top:609px;width:16px;height:16px;background:#7864b4;"></div><div class="a" style="left:1896px;top:625px;width:16px;height:16px;background:#8c78b4;"></div><div class="a" style="left:1896px;top:641px;width:16px;height:16px;background:#466496;"></div><div class="a" style="left:1896px;top:657px;width:16px;height:16px;background:#4b466e;"></div><div class="a" style="left:1896px;top:673px;width:16px;height:16px;background:#647896;"></div><div class="a" style="left:1896px;top:689px;width:16px;height:16px;background:#2d8cdc;"></div><div class="a" style="left:1896px;top:705px;width:16px;height:16px;background:#82d2f0;"></div><div class="a" style="left:1896px;top:721px;width:16px;height:16px;background:#a0bed2;"></div><div class="a" style="left:1896px;top:737px;width:16px;height:16px;background:#82a0aa;"></div><div class="a" style="left:1896px;top:753px;width:16px;height:16px;background:#5f7378;"></div><div class="a" style="left:1896px;top:769px;width:16px;height:16px;background:#3c5055;"></div><div class="a" style="left:1896px;top:785px;width:16px;height:16px;background:#3c6e64;"></div><div class="a" style="left:1896px;top:801px;width:16px;height:16px;background:#2d8273;"></div><div class="a" style="left:1896px;top:817px;width:16px;height:16px;background:#5aa096;"></div><div class="a" style="left:1896px;top:833px;width:16px;height:16px;background:#3c9b8c;"></div><div class="a" style="left:1896px;top:849px;width:16px;height:16px;background:#50a078;"></div><div class="a" style="left:1896px;top:865px;width:16px;height:16px;background:#46bed2;"></div><div class="a" style="left:1896px;top:881px;width:16px;height:16px;background:#32a0b4;"></div><div class="a" style="left:1896px;top:897px;width:16px;height:16px;background:#aabeaa;"></div><div class="a" style="left:1896px;top:913px;width:16px;height:16px;background:#c8e6d2;"></div><div class="a" style="left:1896px;top:929px;width:16px;height:16px;background:#96d2aa;"></div><div class="a" style="left:1896px;top:945px;width:16px;height:16px;background:#82a096;"></div><div class="a" style="left:1896px;top:961px;width:16px;height:16px;background:#8ca078;"></div><div class="a" style="left:1896px;top:977px;width:16px;height:16px;background:#aac864;"></div><div class="a" style="left:1896px;top:993px;width:16px;height:16px;background:#aabe78;"></div><div class="a" style="left:1896px;top:1009px;width:16px;height:11px;background:#a0d21e;"></div><div class="a" style="left:1898px;top:1022px;width:12px;height:12px;background:#3e3e3e;border-radius:6px"></div><svg class="i" style="left:1892.0px;top:1016.5px" width="24" height="24" viewBox="-12.0 -12.0 24 24" fill="none" stroke="#1f1f1f" stroke-width="1.3" stroke-linecap="round" stroke-linejoin="round"><path d="M-2.6 -1.2 L0 1.4 L2.6 -1.2"/></svg>
<div class="a" style="left:4px;top:1040px;width:1912px;height:1px;background:#454545;"></div><div class="a" style="left:4px;top:1041px;width:1912px;height:31px;background:#262626;"></div><svg class="i" style="left:8.0px;top:1045.0px" width="24" height="24" viewBox="-12.0 -12.0 24 24" fill="none" stroke="#dcdcdc" stroke-width="1.15" stroke-linecap="round" stroke-linejoin="round"><path d="M-1.3 -8.2 H1.3 L1.9 -5.9 L3.3 -5.3 L5.4 -6.5 L7.2 -4.7 L6 -2.6 L6.6 -1.2 L8.9 -0.6 V2 L6.6 2.6 L6 4 L7.2 6.1 L5.4 7.9 L3.3 6.7 L1.9 7.3 L1.3 9.6 H-1.3 L-1.9 7.3 L-3.3 6.7 L-5.4 7.9 L-7.2 6.1 L-6 4 L-6.6 2.6 L-8.9 2 V-0.6 L-6.6 -1.2 L-6 -2.6 L-7.2 -4.7 L-5.4 -6.5 L-3.3 -5.3 L-1.9 -5.9Z" fill="#e4e4e4" stroke="none" transform="translate(0 -0.7)"/><circle cx="0" cy="0" r="3" fill="#262626" stroke="none"/><path d="M4 0 H0 L4 -4Z" fill="#e0e0e0" stroke="none" transform="translate(7 10.5)"/></svg><div class="t" style="left:40.9px;top:1050.93px;font-size:13px;color:#dcdcdc;letter-spacing:-0.378px;">( 16.814, 4.648&nbsp; )</div><div class="t" style="left:166.9px;top:1050.93px;font-size:13px;color:#dcdcdc;letter-spacing:-0.077px;">PowerClip-Rechteck auf Layer 1</div><svg class="i" style="left:1451.0px;top:1045.0px" width="24" height="24" viewBox="-12.0 -12.0 24 24" fill="none" stroke="#dcdcdc" stroke-width="1.15" stroke-linecap="round" stroke-linejoin="round"><path d="M-2 -6.5 L5 0 L-0.5 5.5 Q-1.3 6.2 -2.2 5.5 L-6 1.8 Q-6.7 1 -6 0.2Z" fill="#262626" stroke="#f2f2f2" stroke-width="1.1"/><path d="M-5.2 0.8 H3.8 L-1 5.2 Q-1.4 5.5 -1.9 5.1Z" fill="#d9534f" stroke="none"/><path d="M-4 -7.5 L-0.5 -3.5" stroke="#f2f2f2" stroke-width="1.1"/><path d="M5.5 3.5 Q7.5 6 6.7 7.2 Q5.5 8.3 4.3 7.2 Q3.5 6 5.5 3.5Z" fill="#d9534f" stroke="none"/></svg><div class="a" style="left:1478px;top:1047px;width:20px;height:20px;background:#ffb50d;border-radius:3px"></div><div class="t" style="left:1503px;top:1050.93px;font-size:13px;color:#dcdcdc;letter-spacing:-0.533px;">R:255 G:181 B:13 (#FFB...</div><svg class="i" style="left:1650.0px;top:1045.0px" width="24" height="24" viewBox="-12.0 -12.0 24 24" fill="none" stroke="#dcdcdc" stroke-width="1.1" stroke-linecap="round" stroke-linejoin="round"><path d="M0 -8 L4.3 0.5 Q4.8 4 2.4 6 H-2.4 Q-4.8 4 -4.3 0.5Z"/><path d="M0 -8 V0.5"/><circle cx="0" cy="1.8" r="1.2"/><path d="M-3.5 8 H3.5"/></svg><div class="a" style="left:1677px;top:1047px;width:20px;height:20px;background:#ffffff;border-radius:2.5px"></div><svg class="i" style="left:1675.0px;top:1045.0px" width="24" height="24" viewBox="-12.0 -12.0 24 24" fill="none" stroke="#dcdcdc" stroke-width="1.15" stroke-linecap="round" stroke-linejoin="round"><path d="M-8 8.5 L8 -8.5" stroke="#e0202a" stroke-width="1.3"/></svg><div class="t" style="left:1701.5px;top:1050.93px;font-size:13px;color:#dcdcdc;letter-spacing:-0.130px;">Keine</div><div class="sep" style="left:1878px;top:1044px;height:26px"></div><svg class="i" style="left:1886.0px;top:1044.0px" width="24" height="24" viewBox="-12.0 -12.0 24 24" fill="none" stroke="#dcdcdc" stroke-width="1.15" stroke-linecap="round" stroke-linejoin="round"><rect x="-7.5" y="-7" width="15" height="11" fill="#f2f2f2" stroke="none"/><rect x="-6.2" y="-5.8" width="12.4" height="4.5" fill="#e0605a" stroke="none"/><rect x="-6.2" y="-1.3" width="12.4" height="4.2" fill="#3f8fe0" stroke="none"/><circle cx="0" cy="-1.3" r="2.3" fill="#f2f2f2" stroke="none"/><circle cx="0" cy="-1.3" r="1" fill="#333" stroke="none"/><path d="M-2 4 V6.5 M2 4 V6.5" stroke="#f2f2f2" stroke-width="1"/><path d="M-5 7.5 H5" stroke="#f2f2f2" stroke-width="1.2"/></svg>
</div></div>
</body></html>
